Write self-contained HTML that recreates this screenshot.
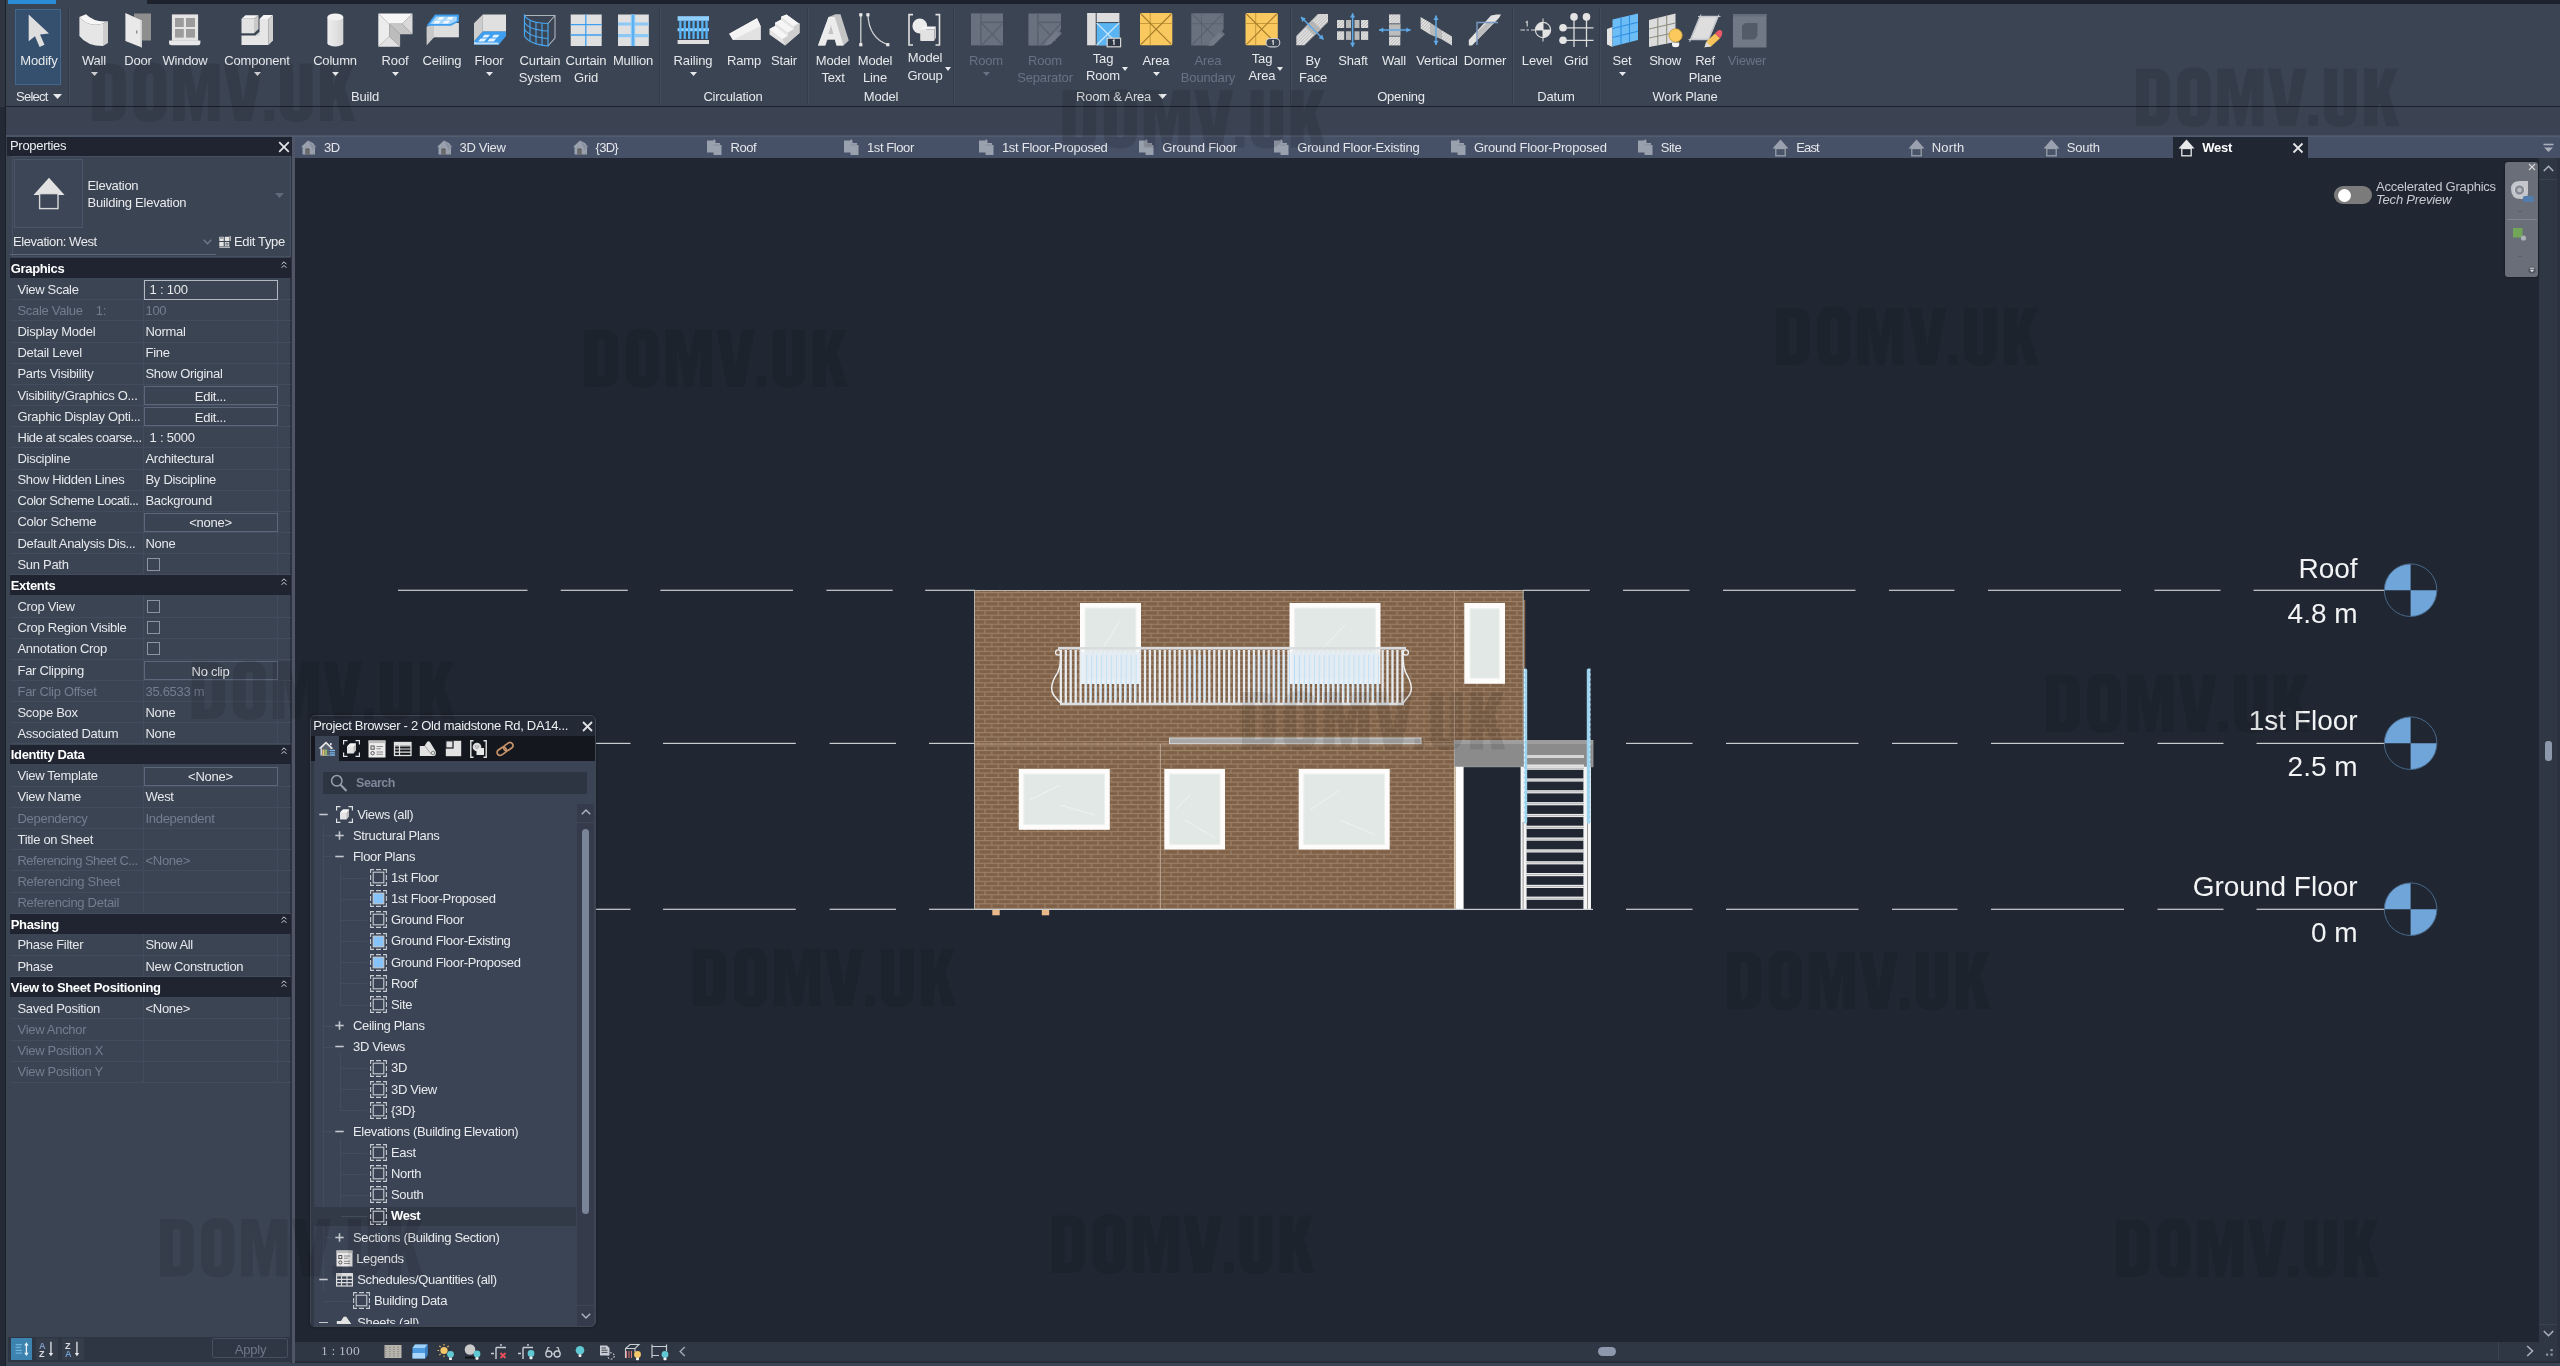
<!DOCTYPE html><html><head><meta charset="utf-8"><title>Revit</title><style>
*{box-sizing:border-box;margin:0;padding:0}
html,body{width:2560px;height:1366px;overflow:hidden;background:#3b4453;}
body{font-family:"Liberation Sans",sans-serif;color:#e9eaec;font-size:13px;position:relative;-webkit-font-smoothing:antialiased}
.a{position:absolute}
.t{position:absolute;white-space:nowrap;line-height:16px;font-size:13px;color:#e9eaec}
.c{transform:translateX(-50%);text-align:center}
.dim{color:#707a8a}
.b{font-weight:bold;color:#fff}
svg{position:absolute;overflow:visible}
</style></head><body><div id="root" style="position:absolute;left:0;top:0;width:2560px;height:1366px;overflow:hidden;will-change:transform">
<div class="a" style="left:0px;top:0px;width:2560px;height:1366px;background:#3b4453;"></div>
<div class="a" style="left:147px;top:0px;width:2413px;height:4px;background:#1d222c;"></div>
<div class="a" style="left:8px;top:0px;width:48px;height:4px;background:#2a8bd6;"></div>
<div class="a" style="left:0px;top:0px;width:5px;height:107px;background:#2f3641;"></div>
<div class="a" style="left:5px;top:0px;width:1px;height:1366px;background:#1c2029;"></div>
<div class="a" style="left:0px;top:107px;width:5px;height:1259px;background:#232935;"></div>
<div class="a" style="left:6px;top:106px;width:2554px;height:1px;background:#1c212b;"></div>
<div class="a" style="left:6px;top:107px;width:2554px;height:28px;background:#3b4353;"></div>
<div class="a" style="left:6px;top:135px;width:2554px;height:2px;background:#4b5568;"></div>
<div class="a" style="left:15px;top:9px;width:46px;height:76px;background:#34506e;border:1px solid #41688c"></div>
<div class="a" style="left:68px;top:8px;width:1px;height:96px;background:#343c4a;"></div>
<div class="a" style="left:69px;top:8px;width:1px;height:96px;background:#434c5c;"></div>
<div class="a" style="left:659px;top:8px;width:1px;height:96px;background:#343c4a;"></div>
<div class="a" style="left:660px;top:8px;width:1px;height:96px;background:#434c5c;"></div>
<div class="a" style="left:807px;top:8px;width:1px;height:96px;background:#343c4a;"></div>
<div class="a" style="left:808px;top:8px;width:1px;height:96px;background:#434c5c;"></div>
<div class="a" style="left:953px;top:8px;width:1px;height:96px;background:#343c4a;"></div>
<div class="a" style="left:954px;top:8px;width:1px;height:96px;background:#434c5c;"></div>
<div class="a" style="left:1290px;top:8px;width:1px;height:96px;background:#343c4a;"></div>
<div class="a" style="left:1291px;top:8px;width:1px;height:96px;background:#434c5c;"></div>
<div class="a" style="left:1512px;top:8px;width:1px;height:96px;background:#343c4a;"></div>
<div class="a" style="left:1513px;top:8px;width:1px;height:96px;background:#434c5c;"></div>
<div class="a" style="left:1599px;top:8px;width:1px;height:96px;background:#343c4a;"></div>
<div class="a" style="left:1600px;top:8px;width:1px;height:96px;background:#434c5c;"></div>
<div class="t c" style="left:39px;top:52.5px;color:#e6e8eb;letter-spacing:-0.16px">Modify</div>
<svg style="left:22px;top:12px" width="34" height="36" viewBox="0 0 34 36"><path d="M6.7 2.4 L6.7 29.3 L13 24.3 L17.6 35 L22.5 32.7 L18 22.5 L27 21.5 Z" fill="#dedede"/></svg>
<div class="t c" style="left:94px;top:52.5px;color:#e6e8eb;letter-spacing:-0.15px">Wall</div>
<svg style="left:90.5px;top:71.5px" width="7" height="4" viewBox="0 0 7 4"><path d="M0 0 H7 L3.5 4 Z" fill="#e6e8eb"/></svg>
<svg style="left:77px;top:12px" width="34" height="36" viewBox="0 0 34 36"><path d="M2.4 5 Q12 16 26 11.5 L26 34 Q10 34 2.4 24 Z" fill="#e6e6e6"/><path d="M2.4 5 L9 2.3 Q17 10.5 31 9.3 L26 11.5 Q12 16 2.4 5 Z" fill="#f6f6f6"/><path d="M26 11.5 L31 9.3 L31 31 L26 34 Z" fill="#cdcdcd"/></svg>
<div class="t c" style="left:138px;top:52.5px;color:#e6e8eb;letter-spacing:-0.18px">Door</div>
<svg style="left:121px;top:12px" width="34" height="36" viewBox="0 0 34 36"><rect x="13" y="1.5" width="17" height="27" fill="#8e8e8e"/><path d="M4.4 1.1 L20.9 8.6 L20.9 35.5 L4.4 29 Z" fill="#e9e9e9"/><path d="M19.4 8 L20.9 8.6 L20.9 35.5 L19.4 35 Z" fill="#cfcfcf"/><rect x="15" y="18.5" width="1.4" height="3" fill="#8a8a8a"/></svg>
<div class="t c" style="left:185px;top:52.5px;color:#e6e8eb;letter-spacing:-0.19px">Window</div>
<svg style="left:168px;top:12px" width="34" height="36" viewBox="0 0 34 36"><rect x="3.9" y="2.4" width="26.2" height="26.4" fill="#e4e4e4"/><rect x="7" y="6" width="8.8" height="9" fill="#9c9c9c"/><rect x="18" y="6" width="9" height="9" fill="#9c9c9c"/><rect x="7" y="17" width="8.8" height="8.6" fill="#9c9c9c"/><rect x="18" y="17" width="9" height="8.6" fill="#9c9c9c"/><path d="M1 28.6 H32.4 V31 Q32.4 33.3 30 33.3 H3.4 Q1 33.3 1 31 Z" fill="#e8e8e8"/></svg>
<div class="t c" style="left:257px;top:52.5px;color:#e6e8eb;letter-spacing:-0.19px">Component</div>
<svg style="left:253.5px;top:71.5px" width="7" height="4" viewBox="0 0 7 4"><path d="M0 0 H7 L3.5 4 Z" fill="#e6e8eb"/></svg>
<svg style="left:240px;top:12px" width="34" height="36" viewBox="0 0 34 36"><path d="M1.5 6.8 L5.5 3.2 H18.5 L14 6.8 Z" fill="#f4f4f4"/><rect x="1.5" y="6.8" width="12.5" height="14.5" fill="#e2e2e2"/><path d="M14 6.8 L18.5 3.2 V17 L14 21.3 Z" fill="#c9c9c9"/><path d="M1.5 23.5 H15.5 L19.5 20 V7 H28.5 V33 H1.5 Z" fill="#e6e6e6"/><path d="M19.5 7 L23.5 3 H33 L28.5 7 Z" fill="#f5f5f5"/><path d="M28.5 7 L33 3 V28.5 L28.5 33 Z" fill="#d0d0d0"/><path d="M15.5 23.5 L19.5 20 V23.5 Z" fill="#cfcfcf"/></svg>
<div class="t c" style="left:335px;top:52.5px;color:#e6e8eb;letter-spacing:-0.19px">Column</div>
<svg style="left:331.5px;top:71.5px" width="7" height="4" viewBox="0 0 7 4"><path d="M0 0 H7 L3.5 4 Z" fill="#e6e8eb"/></svg>
<svg style="left:318px;top:12px" width="34" height="36" viewBox="0 0 34 36"><defs><linearGradient id="gcol" x1="0" x2="1"><stop offset="0" stop-color="#ededed"/><stop offset=".5" stop-color="#e2e2e2"/><stop offset="1" stop-color="#d4d4d4"/></linearGradient></defs><path d="M9.4 5 V31.5 A8 3.3 0 0 0 25.3 31.5 V5 Z" fill="url(#gcol)"/><ellipse cx="17.35" cy="5" rx="7.95" ry="3.6" fill="#f2f2f2"/></svg>
<div class="t c" style="left:395px;top:52.5px;color:#e6e8eb;letter-spacing:-0.17px">Roof</div>
<svg style="left:391.5px;top:71.5px" width="7" height="4" viewBox="0 0 7 4"><path d="M0 0 H7 L3.5 4 Z" fill="#e6e8eb"/></svg>
<svg style="left:378px;top:12px" width="34" height="36" viewBox="0 0 34 36"><path d="M.3 1.4 H34.5 L24 11.8 H11.2 Z" fill="#f6f6f6"/><path d="M34.5 1.4 V22.2 L24 11.8 Z" fill="#dadada"/><path d="M11.2 11.8 H24 L34.5 22.2 H22.1 Z" fill="#c6c6c6"/><path d="M.3 1.4 L11.2 11.8 V24.5 L.3 34.8 Z" fill="#ececec"/><path d="M11.2 11.8 L22.1 22.2 V34.8 L11.2 24.5 Z" fill="#bcbcbc"/><path d="M.3 34.8 H22.1 L11.2 24.5 Z" fill="#e2e2e2"/></svg>
<div class="t c" style="left:442px;top:52.5px;color:#e6e8eb;letter-spacing:-0.14px">Ceiling</div>
<svg style="left:425px;top:12px" width="34" height="36" viewBox="0 0 34 36"><path d="M1.6 14.8 L9 11.5 V25.3 L1.6 33.5 Z" fill="#c9c9c9"/><rect x="9" y="11" width="24.9" height="14.3" fill="#dedede"/><path d="M10 2.6 H33.9 V9.5 L26 13.8 H1.6 Z" fill="#3f9fee"/><path d="M11 4.4 H31.8 V8.7 L25.3 12 H5.2 Z" fill="#a8d6fb"/><path d="M14.5 5 H19.5 L17.3 7.8 H12.2 Z M23.5 5 H28.5 L26.8 7.8 H21.5 Z M10.5 8.7 H15.8 L13.8 11.4 H8.3 Z M19.5 8.7 H25 L23 11.4 H17.5 Z" fill="#f0f8ff"/></svg>
<div class="t c" style="left:489px;top:52.5px;color:#e6e8eb;letter-spacing:-0.15px">Floor</div>
<svg style="left:485.5px;top:71.5px" width="7" height="4" viewBox="0 0 7 4"><path d="M0 0 H7 L3.5 4 Z" fill="#e6e8eb"/></svg>
<svg style="left:472px;top:12px" width="34" height="36" viewBox="0 0 34 36"><path d="M2 11.2 L10.8 2.5 V19.6 L2 29.5 Z" fill="#cdcdcd"/><rect x="10.8" y="2.5" width="23.2" height="17.1" fill="#e0e0e0"/><path d="M10.8 19.6 H34 V24 L27 32.5 H2 V29.5 Z" fill="#3f9fee"/><path d="M12.5 22.8 H18 L15.8 25.4 H10.3 Z M22 22.8 H27.5 L25.3 25.4 H19.8 Z M8.8 26.4 H14.8 L12.2 29.4 H6 Z M17.8 26.4 H24.2 L21.8 29.4 H15.3 Z" fill="#e4f3ff"/><path d="M2 29.5 L4.5 30.6 H26 L27 32.5 H2 Z" fill="#bfe0fb"/></svg>
<div class="t c" style="left:540px;top:52.5px;color:#e6e8eb;letter-spacing:-0.15px">Curtain</div>
<div class="t c" style="left:540px;top:70.0px;color:#e6e8eb;letter-spacing:-0.18px">System</div>
<svg style="left:523px;top:12px" width="34" height="36" viewBox="0 0 34 36"><path d="M1.5 3.5 L32 3.5 L32 26 L25 34 M32 3.5 L25 11.5" stroke="#aeb4bc" stroke-width="1.1" fill="none"/><path d="M1.5 3.5 Q6 11 25 11.5 V34 Q6 32 1.5 24 Z" fill="none" stroke="#4aa8f0" stroke-width="1.2"/><path d="M1.5 10.5 Q6 18 25 19 M1.5 17.3 Q6 25 25 26.5 M7 8.3 V29.4 M13 10.3 V32 M19 11.2 V33.3" stroke="#4aa8f0" stroke-width="1.1" fill="none"/></svg>
<div class="t c" style="left:586px;top:52.5px;color:#e6e8eb;letter-spacing:-0.15px">Curtain</div>
<div class="t c" style="left:586px;top:70.0px;color:#e6e8eb;letter-spacing:-0.15px">Grid</div>
<svg style="left:569px;top:12px" width="34" height="36" viewBox="0 0 34 36"><rect x="1.7" y="2.5" width="31" height="31.5" fill="#e0e0e0"/><path d="M16.8 2.5 V34 M1.7 12.6 H32.7 M1.7 23 H32.7" stroke="#3f9fee" stroke-width="1.3"/></svg>
<div class="t c" style="left:633px;top:52.5px;color:#e6e8eb;letter-spacing:-0.15px">Mullion</div>
<svg style="left:616px;top:12px" width="34" height="36" viewBox="0 0 34 36"><rect x="2" y="2.5" width="30.8" height="31.5" fill="#e0e0e0"/><path d="M2 12 H32.8 M2 23.6 H32.8" stroke="#8cc8f5" stroke-width="3.2"/><path d="M17 2.5 V34" stroke="#8cc8f5" stroke-width="4.4"/><path d="M17 2.5 V34" stroke="#3f9fee" stroke-width="1.2"/></svg>
<div class="t c" style="left:693px;top:52.5px;color:#e6e8eb;letter-spacing:-0.14px">Railing</div>
<svg style="left:689.5px;top:71.5px" width="7" height="4" viewBox="0 0 7 4"><path d="M0 0 H7 L3.5 4 Z" fill="#e6e8eb"/></svg>
<svg style="left:676px;top:12px" width="34" height="36" viewBox="0 0 34 36"><rect x="1.6" y="4.2" width="31.4" height="4.6" fill="#8fd0ff"/><rect x="1.6" y="16.2" width="31.4" height="3" fill="#8fd0ff"/><rect x="3.2" y="8.8" width="2.3" height="18.2" fill="#56b4f5"/><rect x="7.6" y="8.8" width="2.3" height="18.2" fill="#56b4f5"/><rect x="12" y="8.8" width="2.3" height="18.2" fill="#56b4f5"/><rect x="16.4" y="8.8" width="2.3" height="18.2" fill="#56b4f5"/><rect x="20.8" y="8.8" width="2.3" height="18.2" fill="#56b4f5"/><rect x="25.2" y="8.8" width="2.3" height="18.2" fill="#56b4f5"/><rect x="29.4" y="8.8" width="2.3" height="18.2" fill="#56b4f5"/><rect x="1.6" y="28" width="31.4" height="4" fill="#e0e0e0"/></svg>
<div class="t c" style="left:744px;top:52.5px;color:#e6e8eb;letter-spacing:-0.22px">Ramp</div>
<svg style="left:727px;top:12px" width="34" height="36" viewBox="0 0 34 36"><path d="M2.2 21.8 L30 6.3 L33.6 14 V28 H6 Z" fill="#e6e6e6"/><path d="M2.2 21.8 L30 6.3 L33.6 14 L6 28 Z" fill="#f3f3f3"/><path d="M6 28 L33.6 14 V28 Z" fill="#e2e2e2"/></svg>
<div class="t c" style="left:784px;top:52.5px;color:#e6e8eb;letter-spacing:-0.13px">Stair</div>
<svg style="left:767px;top:12px" width="34" height="36" viewBox="0 0 34 36"><path d="M2.5 17 L8 14 L8 10.8 L14 7.6 V4.8 L19.5 2.6 L32.5 12 V21 L18 33.5 L2.5 22.5 Z" fill="#e4e4e4"/><path d="M14 4.8 L19.5 2.6 L32.5 12 L27 14.6 Z M8 10.8 L14 7.8 L27 17.5 L21 20.8 Z M2.5 17 L8 14 L21 24 L15.5 27.2 Z" fill="#f6f6f6"/><path d="M15.5 27 L21 23.8 V20.5 L27 17 V14 L32.5 11 V21 L18 33.5 Z" fill="#cfcfcf"/></svg>
<div class="t c" style="left:833px;top:52.5px;color:#e6e8eb;letter-spacing:-0.18px">Model</div>
<div class="t c" style="left:833px;top:70.0px;color:#e6e8eb;letter-spacing:-0.15px">Text</div>
<svg style="left:816px;top:12px" width="34" height="36" viewBox="0 0 34 36"><path d="M12.5 5 L19.5 2.2 L24.5 2.2 L32.8 28.5 L27.5 33.5 L20.5 33.5 L19 27.5 H11.5 L9.5 33.5 H2 Z" fill="#c4c4c4"/><path d="M12.5 5 H18.8 L27.5 33.5 H20.5 L18.8 27.5 H11 L9 33.5 H2 Z M12.4 22 H17.4 L15 13 Z" fill="#ececec" fill-rule="evenodd"/></svg>
<div class="t c" style="left:875px;top:52.5px;color:#e6e8eb;letter-spacing:-0.18px">Model</div>
<div class="t c" style="left:875px;top:70.0px;color:#e6e8eb;letter-spacing:-0.15px">Line</div>
<svg style="left:858px;top:12px" width="34" height="36" viewBox="0 0 34 36"><path d="M2.8 2.8 V32.7 M9.9 2.8 Q11 26 29.8 32.7" stroke="#cfcfcf" stroke-width="1.3" fill="none"/><rect x="1.2" y="1.2" width="3.2" height="3.2" fill="#e8e8e8"/><rect x="1.2" y="31.1" width="3.2" height="3.2" fill="#e8e8e8"/><rect x="8.3" y="1.2" width="3.2" height="3.2" fill="#e8e8e8"/><rect x="28.2" y="31.1" width="3.2" height="3.2" fill="#e8e8e8"/></svg>
<div class="t c" style="left:925px;top:49.7px;color:#e6e8eb;letter-spacing:-0.18px">Model</div>
<div class="t c" style="left:925px;top:67.8px;color:#e6e8eb;letter-spacing:-0.18px">Group</div>
<svg style="left:945px;top:67px" width="6" height="4" viewBox="0 0 6 4"><path d="M0 0 H6 L3 4 Z" fill="#e6e8eb"/></svg>
<svg style="left:908px;top:12px" width="34" height="36" viewBox="0 0 34 36"><path d="M5 2.6 H1 V33 H5 M27.5 2.6 H31.5 V33 H27.5" stroke="#e0e0e0" stroke-width="1.6" fill="none"/><circle cx="11.8" cy="14" r="7.4" fill="#ececec"/><path d="M12.2 17.5 L15.5 14.5 H28 L26.3 17.5 Z" fill="#f4f4f4"/><rect x="12.2" y="17.5" width="14.1" height="11.5" rx="1" fill="#e2e2e2"/><path d="M26.3 17.5 L28 14.5 V25.5 L26.3 29 Z" fill="#c8c8c8"/></svg>
<div class="t c" style="left:986px;top:52.5px;color:#687283;letter-spacing:-0.22px">Room</div>
<svg style="left:982.5px;top:71.5px" width="7" height="4" viewBox="0 0 7 4"><path d="M0 0 H7 L3.5 4 Z" fill="#687283"/></svg>
<svg style="left:969px;top:12px" width="34" height="36" viewBox="0 0 34 36"><rect x="2" y="1.4" width="32" height="32" fill="#6a717e"/><rect x="11" y="1.4" width="1.6" height="32" fill="#596070"/><rect x="11" y="9.5" width="23" height="1.6" fill="#596070"/><path d="M13 11.5 L33.5 33 M33.5 11.5 L13 33" stroke="#596070" stroke-width="1.2"/></svg>
<div class="t c" style="left:1045px;top:52.5px;color:#687283;letter-spacing:-0.22px">Room</div>
<div class="t c" style="left:1045px;top:70.0px;color:#687283;letter-spacing:-0.16px">Separator</div>
<svg style="left:1028px;top:12px" width="34" height="36" viewBox="0 0 34 36"><path d="M.4 1.4 H33 V17 L20 33.4 H.4 Z" fill="#6a717e"/><rect x="9" y="1.4" width="1.6" height="32" fill="#596070"/><rect x="9" y="9.5" width="24" height="1.6" fill="#596070"/><path d="M11 11.5 L28 29 M33 11.5 L13 33" stroke="#596070" stroke-width="1.2"/><path d="M17.5 33 L19 28.5 L30 17.5 L33.8 21.3 L22.5 32.5 Z" fill="#737a87"/><path d="M29 18.5 L32.8 22.3" stroke="#596070" stroke-width="1"/></svg>
<div class="t c" style="left:1103px;top:51.0px;color:#e6e8eb;letter-spacing:-0.17px">Tag</div>
<div class="t c" style="left:1103px;top:67.9px;color:#e6e8eb;letter-spacing:-0.22px">Room</div>
<svg style="left:1122px;top:67px" width="6" height="4" viewBox="0 0 6 4"><path d="M0 0 H6 L3 4 Z" fill="#e6e8eb"/></svg>
<svg style="left:1086px;top:12px" width="34" height="36" viewBox="0 0 34 36"><rect x="1.1" y="1" width="32.3" height="32.3" fill="#dddddd"/><rect x="10.2" y="10.6" width="23.2" height="22.7" fill="#5ab4f2"/><path d="M10.2 1 V33.3 M10.2 10.6 H33.4" stroke="#3b4453" stroke-width="1"/><path d="M10.7 11 L33 33 M33 11 L10.7 33" stroke="#c7e6fb" stroke-width="1.2"/><rect x="21.2" y="26.2" width="13.4" height="8.6" fill="#2e3644" stroke="#d6d6d6" stroke-width="1.2"/><path d="M26.8 28.8 L28 28 V33" stroke="#e8e8e8" stroke-width="1.2" fill="none"/></svg>
<div class="t c" style="left:1156px;top:52.5px;color:#e6e8eb;letter-spacing:-0.17px">Area</div>
<svg style="left:1152.5px;top:71.5px" width="7" height="4" viewBox="0 0 7 4"><path d="M0 0 H7 L3.5 4 Z" fill="#e6e8eb"/></svg>
<svg style="left:1139px;top:12px" width="34" height="36" viewBox="0 0 34 36"><rect x="1" y="1" width="32.3" height="32.3" rx="1.5" fill="#f9c95f"/><path d="M11.2 1 V33.3 M1 11.5 H33.3" stroke="#c79a3c" stroke-width="1"/><path d="M2 2 L32.3 32.3 M32.3 2 L2 32.3" stroke="#a57c2b" stroke-width="1.1"/></svg>
<div class="t c" style="left:1208px;top:52.5px;color:#687283;letter-spacing:-0.17px">Area</div>
<div class="t c" style="left:1208px;top:70.0px;color:#687283;letter-spacing:-0.17px">Boundary</div>
<svg style="left:1191px;top:12px" width="34" height="36" viewBox="0 0 34 36"><path d="M.3 1.2 H32.6 V17 L20 33.5 H.3 Z" fill="#6a717e"/><path d="M10.5 1.2 V33.5 M.3 11.7 H32.6" stroke="#5c6371" stroke-width="1"/><path d="M1.3 2.2 L27 28 M31.6 2.2 L1.3 32.5" stroke="#596070" stroke-width="1.1"/><path d="M17.5 34 L19 29.5 L30 18.5 L33.8 22.3 L22.5 33.5 Z" fill="#737a87"/><path d="M29 19.5 L32.8 23.3" stroke="#596070" stroke-width="1"/></svg>
<div class="t c" style="left:1262px;top:51.0px;color:#e6e8eb;letter-spacing:-0.17px">Tag</div>
<div class="t c" style="left:1262px;top:67.9px;color:#e6e8eb;letter-spacing:-0.17px">Area</div>
<svg style="left:1277px;top:67px" width="6" height="4" viewBox="0 0 6 4"><path d="M0 0 H6 L3 4 Z" fill="#e6e8eb"/></svg>
<svg style="left:1245px;top:12px" width="34" height="36" viewBox="0 0 34 36"><rect x="0.5" y="1" width="32.3" height="32.3" rx="1.5" fill="#f9c95f"/><path d="M10.7 1 V33.3 M0.5 11.5 H32.8" stroke="#c79a3c" stroke-width="1"/><path d="M1.5 2 L31.8 32.3 M31.8 2 L1.5 32.3" stroke="#a57c2b" stroke-width="1.1"/><rect x="21" y="26.5" width="13.8" height="8.4" rx="4.2" fill="#3a4352" stroke="#c9ccd2" stroke-width="1.1"/><path d="M27 29.3 L28.2 28.6 V33" stroke="#e8e8e8" stroke-width="1.1" fill="none"/></svg>
<div class="t c" style="left:1313px;top:52.5px;color:#e6e8eb;letter-spacing:-0.19px">By</div>
<div class="t c" style="left:1313px;top:70.0px;color:#e6e8eb;letter-spacing:-0.18px">Face</div>
<svg style="left:1296px;top:12px" width="34" height="36" viewBox="0 0 34 36"><defs><pattern id="hA" width="2.2" height="2.2" patternUnits="userSpaceOnUse" patternTransform="rotate(-45)"><rect width="2.2" height="2.2" fill="#e2e2e2"/><rect width="2.2" height="0.8" fill="#b9b9b9"/></pattern><pattern id="hB" width="2.2" height="2.2" patternUnits="userSpaceOnUse" patternTransform="rotate(-45)"><rect width="2.2" height="2.2" fill="#c4c4c4"/><rect width="2.2" height="0.8" fill="#a9a9a9"/></pattern></defs><path d="M.3 24 L22 2 H32 V10 L8.5 33.3 H.3 Z" fill="url(#hA)"/><path d="M9.5 15 L16 8.3 L25 17 L18.3 23.6 Z" fill="#b5b5b5"/><path d="M5 5 L27.5 27.5" stroke="#5fa8e6" stroke-width="1.5"/><path d="M5.0 5.0 L6.2 9.9 L9.9 6.2 Z M27.5 27.5 L22.6 26.3 L26.3 22.6 Z" fill="#5fa8e6"/></svg>
<div class="t c" style="left:1353px;top:52.5px;color:#e6e8eb;letter-spacing:-0.15px">Shaft</div>
<svg style="left:1336px;top:12px" width="34" height="36" viewBox="0 0 34 36"><rect x="1" y="8" width="7.2" height="8" fill="url(#hA)"/><rect x="10" y="8" width="5" height="8" fill="#b9b9b9"/><rect x="18.5" y="8" width="5" height="8" fill="#b9b9b9"/><rect x="25" y="8" width="7.2" height="8" fill="url(#hA)"/><rect x="1" y="19.3" width="7.2" height="8.6" fill="url(#hA)"/><rect x="10" y="19.3" width="5" height="8.6" fill="#b9b9b9"/><rect x="18.5" y="19.3" width="5" height="8.6" fill="#b9b9b9"/><rect x="25" y="19.3" width="7.2" height="8.6" fill="url(#hA)"/><path d="M16.6 1.2 L16.6 35" stroke="#5fa8e6" stroke-width="1.5"/><path d="M16.6 1.2 L14.0 5.5 L19.2 5.5 Z M16.6 35.0 L14.0 30.7 L19.2 30.7 Z" fill="#5fa8e6"/></svg>
<div class="t c" style="left:1394px;top:52.5px;color:#e6e8eb;letter-spacing:-0.15px">Wall</div>
<svg style="left:1377px;top:12px" width="34" height="36" viewBox="0 0 34 36"><rect x="12" y="2.4" width="11.3" height="31" fill="url(#hA)"/><rect x="12" y="11.8" width="11.3" height="12.4" fill="#bdbdbd"/><path d="M12 11.8 H23.3 M12 24.2 H23.3" stroke="#3b4453" stroke-width=".8"/><path d="M2 18 L33.6 18" stroke="#5fa8e6" stroke-width="1.5"/><path d="M2.0 18.0 L6.3 20.6 L6.3 15.4 Z M33.6 18.0 L29.3 20.6 L29.3 15.4 Z" fill="#5fa8e6"/></svg>
<div class="t c" style="left:1437px;top:52.5px;color:#e6e8eb;letter-spacing:-0.13px">Vertical</div>
<svg style="left:1420px;top:12px" width="34" height="36" viewBox="0 0 34 36"><path d="M.6 4.9 L10 10.5 V22.5 L.6 16.5 Z M22 18.5 L32 24.5 V33.5 L22 27.5 Z" fill="url(#hA)"/><path d="M10 10.5 L22 18.5 V27.5 L10 22.5 Z" fill="#b9b9b9"/><path d="M16 3.6 L16 33" stroke="#5fa8e6" stroke-width="1.5"/><path d="M16.0 3.6 L13.4 7.9 L18.6 7.9 Z M16.0 33.0 L13.4 28.7 L18.6 28.7 Z" fill="#5fa8e6"/></svg>
<div class="t c" style="left:1485px;top:52.5px;color:#e6e8eb;letter-spacing:-0.18px">Dormer</div>
<svg style="left:1468px;top:12px" width="34" height="36" viewBox="0 0 34 36"><path d="M.8 28 L23 3.5 L28.5 2.4 H33 L31 6 L4 33.6 H.8 Z" fill="#e2e2e2"/><path d="M9.5 19.5 L19 10.5 H25.5 L9.5 27.5 Z" fill="#bdbdbd"/><path d="M9 33 V10.5 H30" stroke="#7a9bc4" stroke-width="1.4" fill="none"/></svg>
<div class="t c" style="left:1537px;top:52.5px;color:#e6e8eb;letter-spacing:-0.16px">Level</div>
<svg style="left:1520px;top:12px" width="34" height="36" viewBox="0 0 34 36"><path d="M.5 18 H5 M6.5 18 H9 M11 18 H31" stroke="#d8d8d8" stroke-width="1.1"/><path d="M23 6.5 V29.5" stroke="#d8d8d8" stroke-width="1.1"/><circle cx="23" cy="18" r="7.6" fill="none" stroke="#d8d8d8" stroke-width="1.2"/><path d="M23 18 V10.4 A7.6 7.6 0 0 0 15.4 18 Z M23 18 V25.6 A7.6 7.6 0 0 0 30.6 18 Z" fill="#e4e4e4"/><path d="M5.8 10.5 L7.2 9.5 V14.5" stroke="#d8d8d8" stroke-width="1.1" fill="none"/></svg>
<div class="t c" style="left:1576px;top:52.5px;color:#e6e8eb;letter-spacing:-0.15px">Grid</div>
<svg style="left:1559px;top:12px" width="34" height="36" viewBox="0 0 34 36"><path d="M15 5 V35 M27.5 5 V35 M4 15.8 H34.5 M4 28.3 H34.5" stroke="#dcdcdc" stroke-width="1.3"/><circle cx="15" cy="4.9" r="3.8" fill="#e4e4e4"/><circle cx="27.5" cy="4.9" r="3.8" fill="#e4e4e4"/><circle cx="4" cy="15.8" r="3.8" fill="#e4e4e4"/><circle cx="4" cy="28.3" r="3.8" fill="#e4e4e4"/></svg>
<div class="t c" style="left:1622px;top:52.5px;color:#e6e8eb;letter-spacing:-0.16px">Set</div>
<svg style="left:1618.5px;top:71.5px" width="7" height="4" viewBox="0 0 7 4"><path d="M0 0 H7 L3.5 4 Z" fill="#e6e8eb"/></svg>
<svg style="left:1605px;top:12px" width="34" height="36" viewBox="0 0 34 36"><path d="M2 17 L7.5 15 V35 L2 32.5 Z" fill="#e4e4e4"/><path d="M7.5 7.5 L33 1.5 V28 L7.5 34.5 Z" fill="#6cbcf6"/><path d="M16.0 5.5 V32.3 M7.5 16.5 L33 10.3 M24.5 3.5 V30.2 M7.5 25.5 L33 19.2 " stroke="#2f8fe0" stroke-width="1.1" fill="none"/></svg>
<div class="t c" style="left:1665px;top:52.5px;color:#e6e8eb;letter-spacing:-0.20px">Show</div>
<svg style="left:1648px;top:12px" width="34" height="36" viewBox="0 0 34 36"><path d="M1 8 L27.5 1.5 V30 L1 35 Z" fill="#dcdcdc"/><path d="M9.8 5.8 V33.3 M1 17.0 L27.5 11.0 M18.7 3.7 V31.7 M1 26.0 L27.5 20.5 " stroke="#8e8e80" stroke-width="1.1" fill="none"/><circle cx="27.6" cy="23.3" r="6.6" fill="#fbc95c" stroke="#c99a35" stroke-width=".8"/><path d="M24 30.5 H31.2 V32.8 Q31.2 35.3 27.6 35.3 Q24 35.3 24 32.8 Z" fill="#f2f2f2"/></svg>
<div class="t c" style="left:1705px;top:52.5px;color:#e6e8eb;letter-spacing:-0.17px">Ref</div>
<div class="t c" style="left:1705px;top:70.0px;color:#e6e8eb;letter-spacing:-0.17px">Plane</div>
<svg style="left:1688px;top:12px" width="34" height="36" viewBox="0 0 34 36"><path d="M2.5 27.5 L12 4.5 H30 L20.5 27.5 Z" fill="#dedede" stroke="#b9bdc4" stroke-width="1.4"/><path d="M.5 27.5 H22 M10 4.5 H32.5 M13 2.5 L1.5 30 M31 2.5 L19.5 30" stroke="#c4c8ce" stroke-width="1"/><path d="M16.5 35.3 L18.3 29.8 L27 21.5 L32 26.3 L23 34.5 Z" fill="#f5c45a"/><path d="M16.5 35.3 L18.3 29.8 L23 34.5 Z" fill="#dcdcdc"/><path d="M27 21.5 L29.5 19 Q32.5 17 34 19.5 Q35 22.5 32 26.3 Z" fill="#ec5a6a"/></svg>
<div class="t c" style="left:1747px;top:52.5px;color:#687283;letter-spacing:-0.16px">Viewer</div>
<svg style="left:1730px;top:12px" width="34" height="36" viewBox="0 0 34 36"><rect x="3" y="2" width="33.5" height="33.5" fill="#727986"/><rect x="3" y="2" width="33.5" height="2.5" fill="#666d7a"/><path d="M12 14 L15 11 H27.5 V24 L24.5 27.5 H12 Z" fill="#545b68"/></svg>
<div class="t " style="left:16px;top:89.3px;color:#e6e8eb;letter-spacing:-0.75px">Select</div>
<div class="t c" style="left:365px;top:89.3px;color:#e6e8eb;letter-spacing:-0.2px">Build</div>
<div class="t c" style="left:733px;top:89.3px;color:#e6e8eb;letter-spacing:-0.2px">Circulation</div>
<div class="t c" style="left:881px;top:89.3px;color:#e6e8eb;letter-spacing:-0.2px">Model</div>
<div class="t " style="left:1076px;top:89.3px;color:#e6e8eb;letter-spacing:-0.2px">Room &amp; Area</div>
<div class="t c" style="left:1401px;top:89.3px;color:#e6e8eb;letter-spacing:-0.2px">Opening</div>
<div class="t c" style="left:1556px;top:89.3px;color:#e6e8eb;letter-spacing:-0.2px">Datum</div>
<div class="t c" style="left:1685px;top:89.3px;color:#e6e8eb;letter-spacing:-0.2px">Work Plane</div>
<svg style="left:53px;top:94px" width="9" height="5" viewBox="0 0 9 5"><path d="M0 0 H9 L4.5 5 Z" fill="#e6e8eb"/></svg>
<svg style="left:1158px;top:94px" width="9" height="5" viewBox="0 0 9 5"><path d="M0 0 H9 L4.5 5 Z" fill="#e6e8eb"/></svg>
<div class="a" style="left:292px;top:137px;width:2268px;height:21px;background:#465066;"></div>
<div class="a" style="left:292px;top:136px;width:2268px;height:1px;background:#525c70;"></div>
<svg style="left:300px;top:139px" width="17" height="17" viewBox="0 0 17 17"><path d="M1 8 L8 1.5 L13 4 L16 8 L15 8 L15 15.5 L2.5 15.5 L2.5 8 Z" fill="#9aa1ae"/><path d="M8 1.5 L16 8.5 L13.5 8.5 L13.5 15.5 L15 15.5" fill="#7c8492" opacity=".6"/><rect x="5.5" y="9.5" width="4" height="6" fill="#5b5346"/><rect x="6.5" y="10.5" width="2" height="5" fill="#6d7482"/></svg>
<div class="t " style="left:324px;top:140.0px;color:#e4e6ea;letter-spacing:-0.56px">3D</div>
<svg style="left:436px;top:139px" width="17" height="17" viewBox="0 0 17 17"><path d="M1 8 L8 1.5 L13 4 L16 8 L15 8 L15 15.5 L2.5 15.5 L2.5 8 Z" fill="#9aa1ae"/><path d="M8 1.5 L16 8.5 L13.5 8.5 L13.5 15.5 L15 15.5" fill="#7c8492" opacity=".6"/><rect x="5.5" y="9.5" width="4" height="6" fill="#5b5346"/><rect x="6.5" y="10.5" width="2" height="5" fill="#6d7482"/></svg>
<div class="t " style="left:459.5px;top:140.0px;color:#e4e6ea;letter-spacing:-0.31px">3D View</div>
<svg style="left:572px;top:139px" width="17" height="17" viewBox="0 0 17 17"><path d="M1 8 L8 1.5 L13 4 L16 8 L15 8 L15 15.5 L2.5 15.5 L2.5 8 Z" fill="#9aa1ae"/><path d="M8 1.5 L16 8.5 L13.5 8.5 L13.5 15.5 L15 15.5" fill="#7c8492" opacity=".6"/><rect x="5.5" y="9.5" width="4" height="6" fill="#5b5346"/><rect x="6.5" y="10.5" width="2" height="5" fill="#6d7482"/></svg>
<div class="t " style="left:595.5px;top:140.0px;color:#e4e6ea;letter-spacing:-0.70px">{3D}</div>
<svg style="left:706px;top:139px" width="17" height="17" viewBox="0 0 17 17"><path d="M1 1.5 H7.5 V0.5 H9 V1.5 H9.5 V4 H14 V6 H15.5 V16 H7.5 V13.5 H1 Z" fill="#9aa1ae"/><path d="M7.5 6 H14" stroke="#858c99" stroke-width="1"/></svg>
<div class="t " style="left:730.5px;top:140.0px;color:#e4e6ea;letter-spacing:-0.41px">Roof</div>
<svg style="left:843px;top:139px" width="17" height="17" viewBox="0 0 17 17"><path d="M1 1.5 H7.5 V0.5 H9 V1.5 H9.5 V4 H14 V6 H15.5 V16 H7.5 V13.5 H1 Z" fill="#9aa1ae"/><path d="M7.5 6 H14" stroke="#858c99" stroke-width="1"/></svg>
<div class="t " style="left:867px;top:140.0px;color:#e4e6ea;letter-spacing:-0.42px">1st Floor</div>
<svg style="left:978px;top:139px" width="17" height="17" viewBox="0 0 17 17"><path d="M1 1.5 H7.5 V0.5 H9 V1.5 H9.5 V4 H14 V6 H15.5 V16 H7.5 V13.5 H1 Z" fill="#9aa1ae"/><path d="M7.5 6 H14" stroke="#858c99" stroke-width="1"/></svg>
<div class="t " style="left:1001.9px;top:140.0px;color:#e4e6ea;letter-spacing:-0.27px">1st Floor-Proposed</div>
<svg style="left:1138px;top:139px" width="17" height="17" viewBox="0 0 17 17"><path d="M1 1.5 H7.5 V0.5 H9 V1.5 H9.5 V4 H14 V6 H15.5 V16 H7.5 V13.5 H1 Z" fill="#9aa1ae"/><path d="M7.5 6 H14" stroke="#858c99" stroke-width="1"/></svg>
<div class="t " style="left:1162.3px;top:140.0px;color:#e4e6ea;letter-spacing:-0.16px">Ground Floor</div>
<svg style="left:1273px;top:139px" width="17" height="17" viewBox="0 0 17 17"><path d="M1 1.5 H7.5 V0.5 H9 V1.5 H9.5 V4 H14 V6 H15.5 V16 H7.5 V13.5 H1 Z" fill="#9aa1ae"/><path d="M7.5 6 H14" stroke="#858c99" stroke-width="1"/></svg>
<div class="t " style="left:1297.3px;top:140.0px;color:#e4e6ea;letter-spacing:-0.20px">Ground Floor-Existing</div>
<svg style="left:1450px;top:139px" width="17" height="17" viewBox="0 0 17 17"><path d="M1 1.5 H7.5 V0.5 H9 V1.5 H9.5 V4 H14 V6 H15.5 V16 H7.5 V13.5 H1 Z" fill="#9aa1ae"/><path d="M7.5 6 H14" stroke="#858c99" stroke-width="1"/></svg>
<div class="t " style="left:1473.9px;top:140.0px;color:#e4e6ea;letter-spacing:-0.18px">Ground Floor-Proposed</div>
<svg style="left:1637px;top:139px" width="17" height="17" viewBox="0 0 17 17"><path d="M1 1.5 H7.5 V0.5 H9 V1.5 H9.5 V4 H14 V6 H15.5 V16 H7.5 V13.5 H1 Z" fill="#9aa1ae"/><path d="M7.5 6 H14" stroke="#858c99" stroke-width="1"/></svg>
<div class="t " style="left:1660.7px;top:140.0px;color:#e4e6ea;letter-spacing:-0.45px">Site</div>
<svg style="left:1771.5px;top:138.5px" width="17" height="18" viewBox="0 0 17 18"><path d="M8.5 0.5 L16.5 9.5 H0.5 Z" fill="#9aa1ae"/><rect x="3.8" y="9.5" width="9.4" height="7.3" fill="#4a5468" stroke="#9aa1ae" stroke-width="1.3"/></svg>
<div class="t " style="left:1796.2px;top:140.0px;color:#e4e6ea;letter-spacing:-0.85px">East</div>
<svg style="left:1907.5px;top:138.5px" width="17" height="18" viewBox="0 0 17 18"><path d="M8.5 0.5 L16.5 9.5 H0.5 Z" fill="#9aa1ae"/><rect x="3.8" y="9.5" width="9.4" height="7.3" fill="#4a5468" stroke="#9aa1ae" stroke-width="1.3"/></svg>
<div class="t " style="left:1931.8px;top:140.0px;color:#e4e6ea;letter-spacing:0.18px">North</div>
<svg style="left:2042.5px;top:138.5px" width="17" height="18" viewBox="0 0 17 18"><path d="M8.5 0.5 L16.5 9.5 H0.5 Z" fill="#9aa1ae"/><rect x="3.8" y="9.5" width="9.4" height="7.3" fill="#4a5468" stroke="#9aa1ae" stroke-width="1.3"/></svg>
<div class="t " style="left:2066.7px;top:140.0px;color:#e4e6ea;letter-spacing:-0.15px">South</div>
<div class="a" style="left:2173px;top:137px;width:135px;height:21px;background:#202732;"></div>
<svg style="left:2177.5px;top:138.5px" width="17" height="18" viewBox="0 0 17 18"><path d="M8.5 0.5 L16.5 9.5 H0.5 Z" fill="#e8e8ea"/><rect x="3.8" y="9.5" width="9.4" height="7.3" fill="#202732" stroke="#e8e8ea" stroke-width="1.3"/></svg>
<div class="t b" style="left:2202.2px;top:140.0px;;letter-spacing:-0.21px">West</div>
<svg style="left:2292px;top:142px" width="12" height="12" viewBox="0 0 12 12"><path d="M1.5 1.5 L10.5 10.5 M10.5 1.5 L1.5 10.5" stroke="#e6e6e8" stroke-width="1.8"/></svg>
<svg style="left:2543px;top:143px" width="11" height="10" viewBox="0 0 11 10"><path d="M0.5 1.5 H10.5" stroke="#aab0bc" stroke-width="1.6"/><path d="M1 4.5 H10 L5.5 9 Z" fill="#aab0bc"/></svg>
<div class="a" style="left:295px;top:158px;width:2243.5px;height:1183.5px;background:#202732;"></div>
<svg style="left:0;top:0" width="2560" height="1366" viewBox="0 0 2560 1366"><defs><pattern id="brick" x="971.7" y="587.65" width="13.3" height="9.02" patternUnits="userSpaceOnUse"><rect width="13.3" height="9.02" fill="#7f6148"/><rect x="0" y="0" width="13.3" height="1" fill="#9f856c"/><rect x="0" y="4.51" width="13.3" height="1" fill="#9f856c"/><rect x="6.05" y="1.15" width="1.2" height="3.36" fill="#9a8068"/><rect x="-0.6" y="5.66" width="1.2" height="3.36" fill="#9a8068"/><rect x="12.7" y="5.66" width="1.2" height="3.36" fill="#9a8068"/></pattern></defs><rect x="398" y="589.6999999999999" width="129.5" height="1.2" fill="#c9ccd1"/><rect x="560.7" y="589.6999999999999" width="67.09999999999991" height="1.2" fill="#c9ccd1"/><rect x="660.3" y="589.6999999999999" width="132.70000000000005" height="1.2" fill="#c9ccd1"/><rect x="826.4" y="589.6999999999999" width="66.30000000000007" height="1.2" fill="#c9ccd1"/><rect x="925.2" y="589.6999999999999" width="49.799999999999955" height="1.2" fill="#c9ccd1"/><rect x="1523" y="589.6999999999999" width="66.79999999999995" height="1.2" fill="#c9ccd1"/><rect x="1623" y="589.6999999999999" width="66.5" height="1.2" fill="#c9ccd1"/><rect x="1723" y="589.6999999999999" width="132.5" height="1.2" fill="#c9ccd1"/><rect x="1889" y="589.6999999999999" width="65.5" height="1.2" fill="#c9ccd1"/><rect x="1988" y="589.6999999999999" width="133" height="1.2" fill="#c9ccd1"/><rect x="2154.5" y="589.6999999999999" width="66.0" height="1.2" fill="#c9ccd1"/><rect x="2253.5" y="589.6999999999999" width="131.5" height="1.2" fill="#c9ccd1"/><rect x="595" y="742.8" width="35.5" height="1.2" fill="#c9ccd1"/><rect x="663" y="742.8" width="132.79999999999995" height="1.2" fill="#c9ccd1"/><rect x="829.6" y="742.8" width="66.39999999999998" height="1.2" fill="#c9ccd1"/><rect x="929" y="742.8" width="46" height="1.2" fill="#c9ccd1"/><rect x="1626" y="742.8" width="66.5" height="1.2" fill="#c9ccd1"/><rect x="1726" y="742.8" width="132.5" height="1.2" fill="#c9ccd1"/><rect x="1892" y="742.8" width="65.5" height="1.2" fill="#c9ccd1"/><rect x="1991" y="742.8" width="133" height="1.2" fill="#c9ccd1"/><rect x="2157.5" y="742.8" width="66.0" height="1.2" fill="#c9ccd1"/><rect x="2256.5" y="742.8" width="128.5" height="1.2" fill="#c9ccd1"/><rect x="595" y="908.6999999999999" width="35.5" height="1.2" fill="#c9ccd1"/><rect x="663" y="908.6999999999999" width="132.79999999999995" height="1.2" fill="#c9ccd1"/><rect x="829.6" y="908.6999999999999" width="66.39999999999998" height="1.2" fill="#c9ccd1"/><rect x="929" y="908.6999999999999" width="46" height="1.2" fill="#c9ccd1"/><rect x="1626" y="908.6999999999999" width="66.5" height="1.2" fill="#c9ccd1"/><rect x="1726" y="908.6999999999999" width="132.5" height="1.2" fill="#c9ccd1"/><rect x="1892" y="908.6999999999999" width="65.5" height="1.2" fill="#c9ccd1"/><rect x="1991" y="908.6999999999999" width="133" height="1.2" fill="#c9ccd1"/><rect x="2157.5" y="908.6999999999999" width="66.0" height="1.2" fill="#c9ccd1"/><rect x="2256.5" y="908.6999999999999" width="128.5" height="1.2" fill="#c9ccd1"/><rect x="974.5" y="590.5" width="548.7" height="319" fill="url(#brick)"/><rect x="1523.2" y="600" width="2" height="68" fill="#8a6b50"/><rect x="1454.5" y="766.5" width="70" height="143" fill="#202732"/><path d="M974.5 909.5 V590.5 H1523.2 V741" stroke="#b9b4ae" stroke-width="1" fill="none"/><path d="M1454.3 590.5 V909.5" stroke="#b49a84" stroke-width="1" fill="none"/><path d="M974.5 744 H1454" stroke="#b8a08a" stroke-width="1" fill="none"/><path d="M1160.3 744 V909.5" stroke="#c2ad99" stroke-width="1" fill="none"/><rect x="1169.5" y="738" width="251.5" height="5.6" fill="#a9a9a9" stroke="#d4d4d4" stroke-width="1"/><rect x="1080" y="603" width="61" height="81" fill="#fdfcfa"/><rect x="1084.8" y="607.8" width="51.4" height="71.4" fill="#e1e8e5"/><rect x="1085.2" y="608.1999999999999" width="50.6" height="70.60000000000001" fill="none" stroke="#eef2f0" stroke-width=".8"/><rect x="1289.5" y="603" width="91.0" height="81" fill="#fdfcfa"/><rect x="1294.3" y="607.8" width="81.4" height="71.4" fill="#e1e8e5"/><rect x="1294.7" y="608.1999999999999" width="80.60000000000001" height="70.60000000000001" fill="none" stroke="#eef2f0" stroke-width=".8"/><rect x="1464.3" y="603" width="40.700000000000045" height="80.79999999999995" fill="#fdfcfa"/><rect x="1469.8" y="608.5" width="29.700000000000045" height="69.79999999999995" fill="#e1e8e5"/><rect x="1470.2" y="608.9" width="28.900000000000045" height="68.99999999999996" fill="none" stroke="#eef2f0" stroke-width=".8"/><rect x="1018.8" y="769" width="91.0" height="60.799999999999955" fill="#fdfcfa"/><rect x="1023.5999999999999" y="773.8" width="81.4" height="51.19999999999995" fill="#e1e8e5"/><rect x="1023.9999999999999" y="774.1999999999999" width="80.60000000000001" height="50.399999999999956" fill="none" stroke="#eef2f0" stroke-width=".8"/><rect x="1164.3" y="769" width="60.700000000000045" height="80.5" fill="#fdfcfa"/><rect x="1169.1" y="773.8" width="51.100000000000044" height="70.9" fill="#e1e8e5"/><rect x="1169.5" y="774.1999999999999" width="50.30000000000005" height="70.10000000000001" fill="none" stroke="#eef2f0" stroke-width=".8"/><rect x="1298.7" y="769" width="91.0" height="80.5" fill="#fdfcfa"/><rect x="1303.5" y="773.8" width="81.4" height="70.9" fill="#e1e8e5"/><rect x="1303.9" y="774.1999999999999" width="80.60000000000001" height="70.10000000000001" fill="none" stroke="#eef2f0" stroke-width=".8"/><path d="M1090 670 L1120 620 M1300 672 L1345 625 M1030 800 L1060 785 M1060 805 L1095 815 M1175 810 L1190 795 M1185 820 L1215 838 M1310 810 L1340 790 M1340 820 L1375 835" stroke="#f2f6f4" stroke-width=".8" fill="none"/><rect x="1454.6" y="740.5" width="138.4" height="26.3" fill="#8b8b8b"/><rect x="1454.6" y="740.5" width="138.4" height="3.5" fill="#9e9e9e"/><rect x="1454.6" y="740.5" width="138.4" height="26.3" fill="none" stroke="#a4a4a4" stroke-width=".8"/><rect x="1455.8" y="766.8" width="7.8" height="142.5" fill="#fdfdfd"/><rect x="1454.2" y="766.8" width="1.6" height="142.5" fill="#e8d3b8"/><rect x="1520.6" y="766.8" width="6" height="142.5" fill="#f4f4f4"/><rect x="1583.4" y="766.8" width="7.6" height="142.5" fill="#f4f4f4"/><rect x="1522.6" y="822" width="1" height="87" fill="#9a9a9a"/><rect x="1587" y="822" width="1" height="87" fill="#9a9a9a"/><rect x="1526" y="766.6" width="58" height="3.2" fill="#e9e9e9"/><rect x="1526" y="767.9" width="58" height=".7" fill="#a8a8a8"/><rect x="1526" y="778.4" width="58" height="3.2" fill="#e9e9e9"/><rect x="1526" y="779.7" width="58" height=".7" fill="#a8a8a8"/><rect x="1526" y="790.2" width="58" height="3.2" fill="#e9e9e9"/><rect x="1526" y="791.5" width="58" height=".7" fill="#a8a8a8"/><rect x="1526" y="802.1" width="58" height="3.2" fill="#e9e9e9"/><rect x="1526" y="803.4" width="58" height=".7" fill="#a8a8a8"/><rect x="1526" y="813.9" width="58" height="3.2" fill="#e9e9e9"/><rect x="1526" y="815.2" width="58" height=".7" fill="#a8a8a8"/><rect x="1526" y="825.7" width="58" height="3.2" fill="#e9e9e9"/><rect x="1526" y="827.0" width="58" height=".7" fill="#a8a8a8"/><rect x="1526" y="837.5" width="58" height="3.2" fill="#e9e9e9"/><rect x="1526" y="838.8" width="58" height=".7" fill="#a8a8a8"/><rect x="1526" y="849.3" width="58" height="3.2" fill="#e9e9e9"/><rect x="1526" y="850.6" width="58" height=".7" fill="#a8a8a8"/><rect x="1526" y="861.2" width="58" height="3.2" fill="#e9e9e9"/><rect x="1526" y="862.5" width="58" height=".7" fill="#a8a8a8"/><rect x="1526" y="873.0" width="58" height="3.2" fill="#e9e9e9"/><rect x="1526" y="874.3" width="58" height=".7" fill="#a8a8a8"/><rect x="1526" y="884.8" width="58" height="3.2" fill="#e9e9e9"/><rect x="1526" y="886.1" width="58" height=".7" fill="#a8a8a8"/><rect x="1526" y="896.6" width="58" height="3.2" fill="#e9e9e9"/><rect x="1526" y="897.9" width="58" height=".7" fill="#a8a8a8"/><rect x="1526" y="755" width="58" height="3" fill="#d6d6d6"/><rect x="1526" y="764.5" width="58" height="2.3" fill="#e4e4e4"/><rect x="1523.8" y="668.5" width="3.4" height="155" rx="1.5" fill="#9cd3ee"/><rect x="1586.8" y="668.5" width="3.6" height="155" rx="1.5" fill="#9cd3ee"/><path d="M1524.4 668.5 V823" stroke="#e8f4fa" stroke-width="1" stroke-dasharray="3 2"/><path d="M1590 668.5 V823" stroke="#e8f4fa" stroke-width=".8" stroke-dasharray="2 3"/><rect x="974.5" y="908.8" width="618.5" height="1.2" fill="#c9ccd1"/><rect x="992.3" y="910" width="7.4" height="5.3" fill="#e9b98a"/><rect x="1041.8" y="910" width="7.4" height="5.3" fill="#e9b98a"/><rect x="1081" y="652" width="59" height="32" fill="#dfeefa" opacity=".75"/><rect x="1290.5" y="652" width="89" height="32" fill="#dfeefa" opacity=".75"/><path d="M1060.8 650 V703 M1065.8 650 V703 M1070.7 650 V703 M1075.7 650 V703 M1080.6 650 V703 M1085.6 650 V703 M1090.5 650 V703 M1095.5 650 V703 M1100.4 650 V703 M1105.4 650 V703 M1110.3 650 V703 M1115.3 650 V703 M1120.2 650 V703 M1125.2 650 V703 M1130.1 650 V703 M1135.1 650 V703 M1140.0 650 V703 M1145.0 650 V703 M1149.9 650 V703 M1154.9 650 V703 M1159.8 650 V703 M1164.8 650 V703 M1169.7 650 V703 M1174.7 650 V703 M1179.6 650 V703 M1184.6 650 V703 M1189.5 650 V703 M1194.5 650 V703 M1199.4 650 V703 M1204.4 650 V703 M1209.3 650 V703 M1214.3 650 V703 M1219.2 650 V703 M1224.2 650 V703 M1229.1 650 V703 M1234.1 650 V703 M1239.0 650 V703 M1244.0 650 V703 M1248.9 650 V703 M1253.9 650 V703 M1258.8 650 V703 M1263.8 650 V703 M1268.7 650 V703 M1273.7 650 V703 M1278.6 650 V703 M1283.6 650 V703 M1288.5 650 V703 M1293.5 650 V703 M1298.4 650 V703 M1303.4 650 V703 M1308.3 650 V703 M1313.3 650 V703 M1318.2 650 V703 M1323.2 650 V703 M1328.1 650 V703 M1333.1 650 V703 M1338.0 650 V703 M1343.0 650 V703 M1347.9 650 V703 M1352.9 650 V703 M1357.8 650 V703 M1362.8 650 V703 M1367.7 650 V703 M1372.7 650 V703 M1377.6 650 V703 M1382.6 650 V703 M1387.5 650 V703 M1392.5 650 V703 M1397.4 650 V703 M1402.4 650 V703" stroke="#e9ecef" stroke-width="2.3" fill="none"/><path d="M1086.6 655 V700 M1091.5 655 V700 M1096.5 655 V700 M1101.4 655 V700 M1106.4 655 V700 M1111.3 655 V700 M1116.3 655 V700 M1121.2 655 V700 M1126.2 655 V700 M1131.1 655 V700 M1136.1 655 V700 M1185.6 655 V700 M1190.5 655 V700 M1195.5 655 V700 M1200.4 655 V700 M1205.4 655 V700 M1254.9 655 V700 M1259.8 655 V700 M1264.8 655 V700 M1269.7 655 V700 M1274.7 655 V700 M1279.6 655 V700 M1284.6 655 V700 M1289.5 655 V700 M1294.5 655 V700 M1299.4 655 V700 M1294.5 655 V700 M1299.4 655 V700 M1304.4 655 V700 M1309.3 655 V700 M1314.3 655 V700 M1319.2 655 V700 M1324.2 655 V700 M1329.1 655 V700 M1334.1 655 V700 M1339.0 655 V700 M1344.0 655 V700 M1348.9 655 V700 M1353.9 655 V700 M1358.8 655 V700 M1363.8 655 V700 M1368.7 655 V700 M1373.7 655 V700 M1378.6 655 V700" stroke="#b9def6" stroke-width=".9" fill="none" opacity=".9"/><rect x="1058" y="647" width="348" height="2.6" fill="#d9dcdf"/><rect x="1060" y="702.6" width="344" height="2.6" fill="#dcdfe2"/><path d="M1061 650 Q1062 668 1055 677 Q1048 690 1056 698 Q1059 702 1061 703" stroke="#eceef0" stroke-width="1.5" fill="none"/><path d="M1403 650 Q1402 668 1408 677 Q1415 690 1407 698 Q1404 702 1403 703" stroke="#eceef0" stroke-width="1.5" fill="none"/><circle cx="1058.2" cy="652.5" r="2.6" stroke="#eceef0" stroke-width="1.3" fill="none"/><circle cx="1405.8" cy="652.5" r="2.6" stroke="#eceef0" stroke-width="1.3" fill="none"/><path d="M2410.6 590.2 V563.9000000000001 A26.3 26.3 0 0 0 2384.2999999999997 590.2 Z M2410.6 590.2 V616.5 A26.3 26.3 0 0 0 2436.9 590.2 Z" fill="#70a5da"/><circle cx="2410.6" cy="590.2" r="26.3" fill="none" stroke="#48688a" stroke-width="1"/><path d="M2410.6 743.2 V716.9000000000001 A26.3 26.3 0 0 0 2384.2999999999997 743.2 Z M2410.6 743.2 V769.5 A26.3 26.3 0 0 0 2436.9 743.2 Z" fill="#70a5da"/><circle cx="2410.6" cy="743.2" r="26.3" fill="none" stroke="#48688a" stroke-width="1"/><path d="M2410.6 909.2 V882.9000000000001 A26.3 26.3 0 0 0 2384.2999999999997 909.2 Z M2410.6 909.2 V935.5 A26.3 26.3 0 0 0 2436.9 909.2 Z" fill="#70a5da"/><circle cx="2410.6" cy="909.2" r="26.3" fill="none" stroke="#48688a" stroke-width="1"/></svg>
<div class="t" style="right:202.4000000000001px;top:552.5px;font-size:28px;line-height:32px;color:#f2f3f4">Roof</div>
<div class="t" style="right:202.4000000000001px;top:598.3px;font-size:28px;line-height:32px;color:#f2f3f4">4.8 m</div>
<div class="t" style="right:202.4000000000001px;top:705.0px;font-size:28px;line-height:32px;color:#f2f3f4">1st Floor</div>
<div class="t" style="right:202.4000000000001px;top:751.2px;font-size:28px;line-height:32px;color:#f2f3f4">2.5 m</div>
<div class="t" style="right:202.4000000000001px;top:871.0px;font-size:28px;line-height:32px;color:#f2f3f4">Ground Floor</div>
<div class="t" style="right:202.4000000000001px;top:917.2px;font-size:28px;line-height:32px;color:#f2f3f4">0 m</div>
<div class="a" style="left:6px;top:137px;width:289px;height:1226px;background:#3b4453;"></div>
<div class="a" style="left:290px;top:155px;width:2.3px;height:1208px;background:#2c3241;"></div>
<div class="a" style="left:292.3px;top:137px;width:2.7px;height:1226px;background:#4f5564;"></div>
<div class="a" style="left:7px;top:137px;width:285px;height:18.5px;background:#1f2430;"></div>
<div class="t " style="left:10px;top:137.8px;letter-spacing:-0.3px;color:#eceef0">Properties</div>
<svg style="left:278px;top:141px" width="12" height="12" viewBox="0 0 12 12"><path d="M1.2 1.2 L10.8 10.8 M10.8 1.2 L1.2 10.8" stroke="#e6e6e8" stroke-width="1.7"/></svg>
<div class="a" style="left:11.5px;top:156px;width:279.5px;height:101px;background:transparent;border:1px solid #465063"></div>
<div class="a" style="left:14px;top:159px;width:68.5px;height:68.5px;background:#3d4656;border:1px solid #4c5669"></div>
<svg style="left:33px;top:177px" width="32" height="33" viewBox="0 0 32 33"><path d="M16 .8 L31.5 18 H.5 Z" fill="#e2e2e2"/><rect x="6.6" y="16.6" width="18.4" height="15" fill="#3d4656" stroke="#d9d9d9" stroke-width="1.4"/></svg>
<div class="t " style="left:87.5px;top:178.0px;letter-spacing:-0.3px">Elevation</div>
<div class="t " style="left:87.5px;top:195.0px;letter-spacing:-0.25px">Building Elevation</div>
<svg style="left:275px;top:192.5px" width="9" height="5" viewBox="0 0 9 5"><path d="M0 0 H9 L4.5 5 Z" fill="#606a7b"/></svg>
<div class="t " style="left:13px;top:234.3px;letter-spacing:-0.42px">Elevation: West</div>
<div class="a" style="left:10px;top:253.5px;width:206px;height:1.5px;background:#5d687d;"></div>
<svg style="left:203px;top:238.5px" width="9" height="6" viewBox="0 0 9 6"><path d="M.7 .7 L4.5 4.7 L8.3 .7" stroke="#6f7a8c" stroke-width="1.3" fill="none"/></svg>
<svg style="left:219px;top:235.5px" width="12" height="12" viewBox="0 0 12 12"><rect x=".3" y=".8" width="4.4" height="4.2" fill="#e4e4e4"/><rect x="5.8" y=".8" width="4.4" height="4.2" fill="#e4e4e4"/><rect x=".3" y="6" width="4.4" height="4.2" fill="#e4e4e4"/><rect x="5.8" y="6" width="4.4" height="4.2" fill="#e4e4e4"/><path d="M.3 11.2 H11 M11.2 0 V5" stroke="#e4e4e4" stroke-width="1"/><path d="M6.5 7.3 H9.5 M6.5 8.9 H9.5 M1 2 H4" stroke="#3b4453" stroke-width=".8"/></svg>
<div class="t " style="left:234px;top:234.3px;letter-spacing:-0.35px">Edit Type</div>
<div class="a" style="left:143px;top:278.54999999999995px;width:1px;height:803.7px;background:#434c5c;"></div>
<div class="a" style="left:277px;top:278.54999999999995px;width:1px;height:803.7px;background:#434c5c;"></div>
<div class="a" style="left:9.5px;top:258.1px;width:281.5px;height:19.8px;background:#1f2430;"></div>
<div class="t b" style="left:10.8px;top:260.8px;letter-spacing:-0.35px">Graphics</div>
<svg style="left:280.5px;top:260.6px" width="6" height="8" viewBox="0 0 6 8"><path d="M.6 3.2 L3 .8 L5.4 3.2 M.6 6.8 L3 4.4 L5.4 6.8" stroke="#d4d6da" stroke-width="1" fill="none"/></svg>
<div class="a" style="left:9.5px;top:299.3px;width:281.5px;height:1px;background:#434c5c;"></div>
<div class="t " style="left:17.5px;top:281.7px;color:#e6e8eb;letter-spacing:-0.3px">View Scale</div>
<div class="a" style="left:144px;top:280.3px;width:133.5px;height:20.2px;background:transparent;border:1px solid #b3b8c1"></div>
<div class="t " style="left:149.5px;top:281.7px;letter-spacing:-0.2px">1 : 100</div>
<div class="a" style="left:9.5px;top:320.4px;width:281.5px;height:1px;background:#434c5c;"></div>
<div class="t " style="left:17.5px;top:302.9px;color:#737d8d;letter-spacing:-0.3px">Scale Value&nbsp;&nbsp;&nbsp;&nbsp;1:</div>
<div class="t " style="left:145.5px;top:302.9px;color:#737d8d;letter-spacing:-0.3px">100</div>
<div class="a" style="left:9.5px;top:341.6px;width:281.5px;height:1px;background:#434c5c;"></div>
<div class="t " style="left:17.5px;top:324.0px;color:#e6e8eb;letter-spacing:-0.3px">Display Model</div>
<div class="t " style="left:145.5px;top:324.0px;color:#e6e8eb;letter-spacing:-0.3px">Normal</div>
<div class="a" style="left:9.5px;top:362.8px;width:281.5px;height:1px;background:#434c5c;"></div>
<div class="t " style="left:17.5px;top:345.2px;color:#e6e8eb;letter-spacing:-0.3px">Detail Level</div>
<div class="t " style="left:145.5px;top:345.2px;color:#e6e8eb;letter-spacing:-0.3px">Fine</div>
<div class="a" style="left:9.5px;top:383.9px;width:281.5px;height:1px;background:#434c5c;"></div>
<div class="t " style="left:17.5px;top:366.3px;color:#e6e8eb;letter-spacing:-0.3px">Parts Visibility</div>
<div class="t " style="left:145.5px;top:366.3px;color:#e6e8eb;letter-spacing:-0.3px">Show Original</div>
<div class="a" style="left:9.5px;top:405.0px;width:281.5px;height:1px;background:#434c5c;"></div>
<div class="t " style="left:17.5px;top:387.5px;color:#e6e8eb;letter-spacing:-0.29px">Visibility/Graphics O...</div>
<div class="a" style="left:144px;top:386.1px;width:133.5px;height:19.2px;background:#3a4352;border:1px solid #5c677b"></div>
<div class="t c" style="left:210.5px;top:388.5px;letter-spacing:-0.25px">Edit...</div>
<div class="a" style="left:9.5px;top:426.2px;width:281.5px;height:1px;background:#434c5c;"></div>
<div class="t " style="left:17.5px;top:408.6px;color:#e6e8eb;letter-spacing:-0.31px">Graphic Display Opti...</div>
<div class="a" style="left:144px;top:407.2px;width:133.5px;height:19.2px;background:#3a4352;border:1px solid #5c677b"></div>
<div class="t c" style="left:210.5px;top:409.6px;letter-spacing:-0.25px">Edit...</div>
<div class="a" style="left:9.5px;top:447.3px;width:281.5px;height:1px;background:#434c5c;"></div>
<div class="t " style="left:17.5px;top:429.8px;color:#e6e8eb;letter-spacing:-0.46px">Hide at scales coarse...</div>
<div class="t " style="left:149.5px;top:429.8px;letter-spacing:-0.2px">1 : 5000</div>
<div class="a" style="left:9.5px;top:468.5px;width:281.5px;height:1px;background:#434c5c;"></div>
<div class="t " style="left:17.5px;top:450.9px;color:#e6e8eb;letter-spacing:-0.3px">Discipline</div>
<div class="t " style="left:145.5px;top:450.9px;color:#e6e8eb;letter-spacing:-0.3px">Architectural</div>
<div class="a" style="left:9.5px;top:489.6px;width:281.5px;height:1px;background:#434c5c;"></div>
<div class="t " style="left:17.5px;top:472.1px;color:#e6e8eb;letter-spacing:-0.3px">Show Hidden Lines</div>
<div class="t " style="left:145.5px;top:472.1px;color:#e6e8eb;letter-spacing:-0.3px">By Discipline</div>
<div class="a" style="left:9.5px;top:510.8px;width:281.5px;height:1px;background:#434c5c;"></div>
<div class="t " style="left:17.5px;top:493.2px;color:#e6e8eb;letter-spacing:-0.48px">Color Scheme Locati...</div>
<div class="t " style="left:145.5px;top:493.2px;color:#e6e8eb;letter-spacing:-0.3px">Background</div>
<div class="a" style="left:9.5px;top:531.9px;width:281.5px;height:1px;background:#434c5c;"></div>
<div class="t " style="left:17.5px;top:514.4px;color:#e6e8eb;letter-spacing:-0.3px">Color Scheme</div>
<div class="a" style="left:144px;top:513.0px;width:133.5px;height:19.2px;background:#3a4352;border:1px solid #5c677b"></div>
<div class="t c" style="left:210.5px;top:515.4px;letter-spacing:-0.25px">&lt;none&gt;</div>
<div class="a" style="left:9.5px;top:553.1px;width:281.5px;height:1px;background:#434c5c;"></div>
<div class="t " style="left:17.5px;top:535.5px;color:#e6e8eb;letter-spacing:-0.34px">Default Analysis Dis...</div>
<div class="t " style="left:145.5px;top:535.5px;color:#e6e8eb;letter-spacing:-0.3px">None</div>
<div class="a" style="left:9.5px;top:574.2px;width:281.5px;height:1px;background:#434c5c;"></div>
<div class="t " style="left:17.5px;top:556.7px;color:#e6e8eb;letter-spacing:-0.3px">Sun Path</div>
<div class="a" style="left:147px;top:557.7px;width:13px;height:13px;background:transparent;border:1px solid #8c94a2"></div>
<div class="a" style="left:9.5px;top:575.4px;width:281.5px;height:19.8px;background:#1f2430;"></div>
<div class="t b" style="left:10.8px;top:578.1px;letter-spacing:-0.35px">Extents</div>
<svg style="left:280.5px;top:577.9px" width="6" height="8" viewBox="0 0 6 8"><path d="M.6 3.2 L3 .8 L5.4 3.2 M.6 6.8 L3 4.4 L5.4 6.8" stroke="#d4d6da" stroke-width="1" fill="none"/></svg>
<div class="a" style="left:9.5px;top:616.5px;width:281.5px;height:1px;background:#434c5c;"></div>
<div class="t " style="left:17.5px;top:599.0px;color:#e6e8eb;letter-spacing:-0.3px">Crop View</div>
<div class="a" style="left:147px;top:600.0px;width:13px;height:13px;background:transparent;border:1px solid #8c94a2"></div>
<div class="a" style="left:9.5px;top:637.7px;width:281.5px;height:1px;background:#434c5c;"></div>
<div class="t " style="left:17.5px;top:620.1px;color:#e6e8eb;letter-spacing:-0.3px">Crop Region Visible</div>
<div class="a" style="left:147px;top:621.1px;width:13px;height:13px;background:transparent;border:1px solid #8c94a2"></div>
<div class="a" style="left:9.5px;top:658.8px;width:281.5px;height:1px;background:#434c5c;"></div>
<div class="t " style="left:17.5px;top:641.3px;color:#e6e8eb;letter-spacing:-0.3px">Annotation Crop</div>
<div class="a" style="left:147px;top:642.3px;width:13px;height:13px;background:transparent;border:1px solid #8c94a2"></div>
<div class="a" style="left:9.5px;top:680.0px;width:281.5px;height:1px;background:#434c5c;"></div>
<div class="t " style="left:17.5px;top:662.5px;color:#e6e8eb;letter-spacing:-0.3px">Far Clipping</div>
<div class="a" style="left:144px;top:661.0px;width:133.5px;height:19.2px;background:#3a4352;border:1px solid #5c677b"></div>
<div class="t c" style="left:210.5px;top:663.5px;letter-spacing:-0.25px">No clip</div>
<div class="a" style="left:9.5px;top:701.1px;width:281.5px;height:1px;background:#434c5c;"></div>
<div class="t " style="left:17.5px;top:683.6px;color:#737d8d;letter-spacing:-0.3px">Far Clip Offset</div>
<div class="t " style="left:145.5px;top:683.6px;color:#737d8d;letter-spacing:-0.3px">35.6533 m</div>
<div class="a" style="left:9.5px;top:722.3px;width:281.5px;height:1px;background:#434c5c;"></div>
<div class="t " style="left:17.5px;top:704.8px;color:#e6e8eb;letter-spacing:-0.3px">Scope Box</div>
<div class="t " style="left:145.5px;top:704.8px;color:#e6e8eb;letter-spacing:-0.3px">None</div>
<div class="a" style="left:9.5px;top:743.4px;width:281.5px;height:1px;background:#434c5c;"></div>
<div class="t " style="left:17.5px;top:725.9px;color:#e6e8eb;letter-spacing:-0.3px">Associated Datum</div>
<div class="t " style="left:145.5px;top:725.9px;color:#e6e8eb;letter-spacing:-0.3px">None</div>
<div class="a" style="left:9.5px;top:744.5px;width:281.5px;height:19.8px;background:#1f2430;"></div>
<div class="t b" style="left:10.8px;top:747.2px;letter-spacing:-0.35px">Identity Data</div>
<svg style="left:280.5px;top:747.0px" width="6" height="8" viewBox="0 0 6 8"><path d="M.6 3.2 L3 .8 L5.4 3.2 M.6 6.8 L3 4.4 L5.4 6.8" stroke="#d4d6da" stroke-width="1" fill="none"/></svg>
<div class="a" style="left:9.5px;top:785.8px;width:281.5px;height:1px;background:#434c5c;"></div>
<div class="t " style="left:17.5px;top:768.2px;color:#e6e8eb;letter-spacing:-0.3px">View Template</div>
<div class="a" style="left:144px;top:766.8px;width:133.5px;height:19.2px;background:#3a4352;border:1px solid #5c677b"></div>
<div class="t c" style="left:210.5px;top:769.2px;letter-spacing:-0.25px">&lt;None&gt;</div>
<div class="a" style="left:9.5px;top:806.9px;width:281.5px;height:1px;background:#434c5c;"></div>
<div class="t " style="left:17.5px;top:789.4px;color:#e6e8eb;letter-spacing:-0.3px">View Name</div>
<div class="t " style="left:145.5px;top:789.4px;color:#e6e8eb;letter-spacing:-0.3px">West</div>
<div class="a" style="left:9.5px;top:828.0px;width:281.5px;height:1px;background:#434c5c;"></div>
<div class="t " style="left:17.5px;top:810.5px;color:#737d8d;letter-spacing:-0.3px">Dependency</div>
<div class="t " style="left:145.5px;top:810.5px;color:#737d8d;letter-spacing:-0.3px">Independent</div>
<div class="a" style="left:9.5px;top:849.2px;width:281.5px;height:1px;background:#434c5c;"></div>
<div class="t " style="left:17.5px;top:831.6px;color:#e6e8eb;letter-spacing:-0.3px">Title on Sheet</div>
<div class="a" style="left:9.5px;top:870.3px;width:281.5px;height:1px;background:#434c5c;"></div>
<div class="t " style="left:17.5px;top:852.8px;color:#737d8d;letter-spacing:-0.52px">Referencing Sheet C...</div>
<div class="t " style="left:145.5px;top:852.8px;color:#737d8d;letter-spacing:-0.3px">&lt;None&gt;</div>
<div class="a" style="left:9.5px;top:891.5px;width:281.5px;height:1px;background:#434c5c;"></div>
<div class="t " style="left:17.5px;top:873.9px;color:#737d8d;letter-spacing:-0.3px">Referencing Sheet</div>
<div class="a" style="left:9.5px;top:912.6px;width:281.5px;height:1px;background:#434c5c;"></div>
<div class="t " style="left:17.5px;top:895.1px;color:#737d8d;letter-spacing:-0.3px">Referencing Detail</div>
<div class="a" style="left:9.5px;top:913.8px;width:281.5px;height:19.8px;background:#1f2430;"></div>
<div class="t b" style="left:10.8px;top:916.5px;letter-spacing:-0.35px">Phasing</div>
<svg style="left:280.5px;top:916.2px" width="6" height="8" viewBox="0 0 6 8"><path d="M.6 3.2 L3 .8 L5.4 3.2 M.6 6.8 L3 4.4 L5.4 6.8" stroke="#d4d6da" stroke-width="1" fill="none"/></svg>
<div class="a" style="left:9.5px;top:954.9px;width:281.5px;height:1px;background:#434c5c;"></div>
<div class="t " style="left:17.5px;top:937.4px;color:#e6e8eb;letter-spacing:-0.3px">Phase Filter</div>
<div class="t " style="left:145.5px;top:937.4px;color:#e6e8eb;letter-spacing:-0.3px">Show All</div>
<div class="a" style="left:9.5px;top:976.1px;width:281.5px;height:1px;background:#434c5c;"></div>
<div class="t " style="left:17.5px;top:958.5px;color:#e6e8eb;letter-spacing:-0.3px">Phase</div>
<div class="t " style="left:145.5px;top:958.5px;color:#e6e8eb;letter-spacing:-0.3px">New Construction</div>
<div class="a" style="left:9.5px;top:977.2px;width:281.5px;height:19.8px;background:#1f2430;"></div>
<div class="t b" style="left:10.8px;top:979.9px;letter-spacing:-0.35px">View to Sheet Positioning</div>
<svg style="left:280.5px;top:979.7px" width="6" height="8" viewBox="0 0 6 8"><path d="M.6 3.2 L3 .8 L5.4 3.2 M.6 6.8 L3 4.4 L5.4 6.8" stroke="#d4d6da" stroke-width="1" fill="none"/></svg>
<div class="a" style="left:9.5px;top:1018.4px;width:281.5px;height:1px;background:#434c5c;"></div>
<div class="t " style="left:17.5px;top:1000.9px;color:#e6e8eb;letter-spacing:-0.3px">Saved Position</div>
<div class="t " style="left:145.5px;top:1000.9px;color:#e6e8eb;letter-spacing:-0.3px">&lt;None&gt;</div>
<div class="a" style="left:9.5px;top:1039.5px;width:281.5px;height:1px;background:#434c5c;"></div>
<div class="t " style="left:17.5px;top:1022.0px;color:#737d8d;letter-spacing:-0.3px">View Anchor</div>
<div class="a" style="left:9.5px;top:1060.7px;width:281.5px;height:1px;background:#434c5c;"></div>
<div class="t " style="left:17.5px;top:1043.1px;color:#737d8d;letter-spacing:-0.3px">View Position X</div>
<div class="a" style="left:9.5px;top:1081.8px;width:281.5px;height:1px;background:#434c5c;"></div>
<div class="t " style="left:17.5px;top:1064.3px;color:#737d8d;letter-spacing:-0.3px">View Position Y</div>
<div class="a" style="left:8px;top:1336.5px;width:283px;height:25.2px;background:#2e3543;"></div>
<div class="a" style="left:10.5px;top:1337.7px;width:21.7px;height:22.3px;background:#3d83b0;"></div>
<svg style="left:10.5px;top:1337.7px" width="22" height="22.3" viewBox="0 0 19 19"><path d="M4 5.5 H9.5 M4 8 H8.5 M4 10.5 H9.5 M4 13 H9.5" stroke="#6fb2dc" stroke-width="1.1"/><path d="M13.3 4.5 V14.5" stroke="#e8f2f8" stroke-width="1.1"/><path d="M11.4 6.3 L13.3 3.6 L15.2 6.3 Z M11.4 12.7 L13.3 15.4 L15.2 12.7 Z" fill="#e8f2f8"/></svg>
<div class="a" style="left:35.7px;top:1337.7px;width:22.2px;height:22.3px;background:#353c4a;"></div>
<svg style="left:35.7px;top:1337.7px" width="22.2" height="22.3" viewBox="0 0 19 19"><text x="2.6" y="9" font-family="Liberation Sans" font-size="7.8" font-weight="bold" fill="#7f9cc4">A</text><text x="2.6" y="16.3" font-family="Liberation Sans" font-size="7.8" font-weight="bold" fill="#d8dadf">Z</text><path d="M12.8 3.2 V14.5" stroke="#e8eaee" stroke-width="1.1"/><path d="M10.9 12.8 L12.8 15.6 L14.7 12.8 Z" fill="#e8eaee"/></svg>
<div class="a" style="left:61.5px;top:1337.7px;width:22.2px;height:22.3px;background:#353c4a;"></div>
<svg style="left:61.5px;top:1337.7px" width="22.2" height="22.3" viewBox="0 0 19 19"><text x="2.6" y="9" font-family="Liberation Sans" font-size="7.8" font-weight="bold" fill="#d8dadf">Z</text><text x="2.6" y="16.3" font-family="Liberation Sans" font-size="7.8" font-weight="bold" fill="#6f9fd0">A</text><path d="M12.8 3.2 V14.5" stroke="#e8eaee" stroke-width="1.1"/><path d="M10.9 12.8 L12.8 15.6 L14.7 12.8 Z" fill="#e8eaee"/></svg>
<div class="a" style="left:212px;top:1338.3px;width:76.3px;height:20px;background:#2f3644;border:1px solid #464f5f;border-radius:2px"></div>
<div class="t c" style="left:250.5px;top:1342.2px;color:#6f7888;letter-spacing:-0.2px">Apply</div>
<div class="a" style="left:309.5px;top:715.3px;width:286px;height:612px;background:#3b4454;border-radius:5px;border:1px solid #3f4753;box-shadow:0 0 3px rgba(0,0,0,.35)"></div>
<div class="a" style="left:310.5px;top:735px;width:3px;height:591px;background:#313846;"></div>
<div class="a" style="left:310.5px;top:716.3px;width:284px;height:19.5px;background:#232935;border-radius:4px 4px 0 0"></div>
<div class="t " style="left:313.2px;top:717.5px;letter-spacing:-0.31px;color:#eceef0">Project Browser - 2 Old maidstone Rd, DA14...</div>
<svg style="left:581.5px;top:720.5px" width="11" height="11" viewBox="0 0 11 11"><path d="M1 1 L10 10 M10 1 L1 10" stroke="#e0e2e6" stroke-width="1.8"/></svg>
<div class="a" style="left:310.5px;top:735.5px;width:284px;height:25px;background:#14171e;"></div>
<div class="a" style="left:314.5px;top:736px;width:24.5px;height:24.5px;background:#3b4454;"></div>
<svg style="left:318px;top:739.5px" width="18" height="18" viewBox="0 0 18 18"><path d="M.5 8.5 L8 1.5 L15.5 8.5 H14 V15.5 H2.5 V8.5 Z" fill="#e6e6e6"/><path d="M8 3.8 L12.5 8 V15 H3.8 V8 Z" fill="#5b6270"/><rect x="4.5" y="9.5" width="2" height="6" fill="#e2c270"/><rect x="7" y="9.5" width="2" height="6" fill="#8ab56a"/><rect x="11" y="9" width="6" height="7" fill="#3b4454"/><path d="M11.5 10.5 H17 M11.5 12.8 H17 M11.5 15 H17" stroke="#7db8ec" stroke-width="1.3"/><rect x="12" y="3" width="1.6" height="2.2" fill="#e6e6e6"/></svg>
<svg style="left:343px;top:739.5px" width="17" height="17" viewBox="0 0 17 17"><path d="M.6 4.5 V.6 H4.5 M12.5 .6 H16.4 V4.5 M16.4 12.5 V16.4 H12.5 M4.5 16.4 H.6 V12.5" stroke="#dfe1e5" stroke-width="1.2" fill="none"/><path d="M4 6.5 L7 3.5 H13 V10 L10.5 13.5 H4 Z" fill="#e4e4e4"/><path d="M10.5 6.5 L13 3.5 V10 L10.5 13.5 Z" fill="#bdbdbd"/><path d="M4 6.5 L7 3.5 H13 L10.5 6.5 Z" fill="#f6f6f6"/></svg>
<svg style="left:368px;top:739.5px" width="18" height="18" viewBox="0 0 18 18"><rect x=".5" y=".5" width="17" height="17" fill="#ececec"/><rect x=".5" y=".5" width="17" height="2.6" fill="#bdbdbd"/><rect x="3" y="6" width="3.2" height="3.2" fill="none" stroke="#555" stroke-width="1"/><circle cx="4.6" cy="13.2" r="1.7" fill="none" stroke="#555" stroke-width="1"/><path d="M8.5 6.5 H15 M8.5 8.8 H13 M8.5 12 H15 M8.5 14.3 H15" stroke="#8a8a8a" stroke-width="1.1"/></svg>
<svg style="left:393.5px;top:739.5px" width="18" height="18" viewBox="0 0 18 18"><rect x=".5" y="2.5" width="16.5" height="13" fill="#14171e" stroke="#e2e2e2" stroke-width="1.3"/><path d="M.5 5.8 H17 M.5 9 H17 M.5 12.2 H17 M5.5 2.5 V15.5" stroke="#e2e2e2" stroke-width="1.2"/><rect x=".5" y="2.5" width="16.5" height="2.6" fill="#e2e2e2"/></svg>
<svg style="left:418.5px;top:739.5px" width="18" height="18" viewBox="0 0 18 18"><path d="M.8 16 V6 H5.5 L8 2 Q9.5 .6 11 2 L16.5 11 Q17.5 13.5 16.5 15 Q16 16 14.5 16 Z" fill="#e2e2e2"/><circle cx="14" cy="13" r="1.7" fill="none" stroke="#7a7a7a" stroke-width=".9"/><path d="M6 6 L12 14" stroke="#9a9a9a" stroke-width=".9"/></svg>
<svg style="left:445px;top:739.5px" width="18" height="18" viewBox="0 0 18 18"><path d="M.8 .8 H16.2 V16.2 H.8 Z" fill="#e2e2e2"/><rect x=".8" y=".8" width="7.2" height="7.2" fill="#e2e2e2" stroke="#14171e" stroke-width="1.2"/></svg>
<svg style="left:469.5px;top:739.5px" width="18" height="18" viewBox="0 0 18 18"><path d="M3.5 .8 H.8 V17.2 H3.5 M13.5 .8 H16.2 V17.2 H13.5" stroke="#e2e2e2" stroke-width="1.4" fill="none"/><circle cx="7" cy="7" r="4.3" fill="#dcdcdc"/><rect x="6.5" y="8" width="7.5" height="7" fill="#e8e8e8"/><path d="M5 6 H9 L7 9 Z" fill="none" stroke="#9a9a9a" stroke-width=".7"/></svg>
<svg style="left:495.5px;top:739.5px" width="18" height="18" viewBox="0 0 18 18"><g transform="rotate(-35 9 9)" fill="none" stroke="#c9936a" stroke-width="1.7"><rect x="0" y="6" width="10" height="6" rx="3"/><rect x="8" y="6" width="10" height="6" rx="3"/></g></svg>
<div class="a" style="left:322.5px;top:771.5px;width:264px;height:22.5px;background:#2d3442;"></div>
<svg style="left:330px;top:774px" width="19" height="19" viewBox="0 0 19 19"><circle cx="6.8" cy="6.8" r="5.2" fill="none" stroke="#9aa1ae" stroke-width="1.5"/><path d="M10.5 10.8 L16.5 17" stroke="#9aa1ae" stroke-width="2"/></svg>
<div class="t " style="left:356px;top:775.0px;color:#7e8797;font-weight:bold;letter-spacing:-0.45px;font-size:12.5px">Search</div>
<div class="a" style="left:576.5px;top:804px;width:17.5px;height:17.5px;background:#353b4a;"></div>
<svg style="left:581px;top:809px" width="10" height="6" viewBox="0 0 10 6"><path d="M.8 5.2 L5 1 L9.2 5.2" stroke="#aeb4bf" stroke-width="1.5" fill="none"/></svg>
<div class="a" style="left:576.5px;top:821.5px;width:17.5px;height:504.5px;background:#353b4a;border-radius:0 0 4px 0"></div>
<div class="a" style="left:576.5px;top:821.5px;width:17.5px;height:1px;background:#3e4553;"></div>
<div class="a" style="left:576.5px;top:1305.3px;width:17.5px;height:1px;background:#3e4553;"></div>
<div class="a" style="left:581.5px;top:828.5px;width:7px;height:385px;background:#7a8498;border-radius:3.5px"></div>
<svg style="left:580.7px;top:1312.6px" width="10" height="6" viewBox="0 0 10 6"><path d="M.8 .8 L5 5 L9.2 .8" stroke="#aeb4bf" stroke-width="1.5" fill="none"/></svg>
<div class="a" style="left:323px;top:825px;width:1px;height:465px;background:#434c5c;"></div>
<svg style="left:318.5px;top:809.7px" width="9" height="9" viewBox="0 0 9 9"><path d="M.3 4.5 H8.7" stroke="#c3c7ce" stroke-width="1.6"/></svg>
<svg style="left:336px;top:805.9000000000001px" width="17" height="17" viewBox="0 0 17 17"><path d="M.6 4.5 V.6 H4.5 M12.5 .6 H16.4 V4.5 M16.4 12.5 V16.4 H12.5 M4.5 16.4 H.6 V12.5" stroke="#dfe1e5" stroke-width="1.2" fill="none"/><path d="M4 6.5 L7 3.5 H13 V10 L10.5 13.5 H4 Z" fill="#e4e4e4"/><path d="M10.5 6.5 L13 3.5 V10 L10.5 13.5 Z" fill="#bdbdbd"/><path d="M4 6.5 L7 3.5 H13 L10.5 6.5 Z" fill="#f6f6f6"/></svg>
<div class="t " style="left:357.2px;top:806.5px;letter-spacing:-0.33px;color:#e8eaed">Views (all)</div>
<div class="a" style="left:324px;top:835px;width:9px;height:1px;background:#434c5c;"></div>
<svg style="left:335.2px;top:830.9px" width="9" height="9" viewBox="0 0 9 9"><path d="M.3 4.5 H8.7" stroke="#c3c7ce" stroke-width="1.6"/><path d="M4.5 .3 V8.7" stroke="#c3c7ce" stroke-width="1.6"/></svg>
<div class="t " style="left:353px;top:827.6px;letter-spacing:-0.33px;color:#e8eaed">Structural Plans</div>
<div class="a" style="left:324px;top:856px;width:9px;height:1px;background:#434c5c;"></div>
<svg style="left:335.2px;top:852.0px" width="9" height="9" viewBox="0 0 9 9"><path d="M.3 4.5 H8.7" stroke="#c3c7ce" stroke-width="1.6"/></svg>
<div class="a" style="left:340px;top:864px;width:1px;height:142px;background:#434c5c;"></div>
<div class="t " style="left:353px;top:848.8px;letter-spacing:-0.33px;color:#e8eaed">Floor Plans</div>
<div class="a" style="left:341px;top:878px;width:26px;height:1px;background:#434c5c;"></div>
<svg style="left:370px;top:869.1500000000001px" width="17" height="17" viewBox="0 0 17 17"><rect x="3.2" y="3.2" width="10.6" height="10.6" fill="none" stroke="#c8ccd3" stroke-width="1.1"/><path d="M.6 4 V.6 H4 M6 .6 H11 M13 .6 H16.4 V4 M16.4 6 V11 M16.4 13 V16.4 H13 M11 16.4 H6 M4 16.4 H.6 V13 M.6 11 V6" stroke="#c8ccd3" stroke-width="1.1" fill="none"/></svg>
<div class="t " style="left:391px;top:870.0px;letter-spacing:-0.33px;color:#e8eaed">1st Floor</div>
<div class="a" style="left:341px;top:899px;width:26px;height:1px;background:#434c5c;"></div>
<svg style="left:370px;top:890.3000000000001px" width="17" height="17" viewBox="0 0 17 17"><rect x="3.2" y="3.2" width="10.6" height="10.6" fill="#86c3fb"/><rect x="3.2" y="3.2" width="10.6" height="10.6" fill="none" stroke="#c8ccd3" stroke-width="1.1"/><path d="M.6 4 V.6 H4 M6 .6 H11 M13 .6 H16.4 V4 M16.4 6 V11 M16.4 13 V16.4 H13 M11 16.4 H6 M4 16.4 H.6 V13 M.6 11 V6" stroke="#c8ccd3" stroke-width="1.1" fill="none"/></svg>
<div class="t " style="left:391px;top:891.1px;letter-spacing:-0.33px;color:#e8eaed">1st Floor-Proposed</div>
<div class="a" style="left:341px;top:920px;width:26px;height:1px;background:#434c5c;"></div>
<svg style="left:370px;top:911.45px" width="17" height="17" viewBox="0 0 17 17"><rect x="3.2" y="3.2" width="10.6" height="10.6" fill="none" stroke="#c8ccd3" stroke-width="1.1"/><path d="M.6 4 V.6 H4 M6 .6 H11 M13 .6 H16.4 V4 M16.4 6 V11 M16.4 13 V16.4 H13 M11 16.4 H6 M4 16.4 H.6 V13 M.6 11 V6" stroke="#c8ccd3" stroke-width="1.1" fill="none"/></svg>
<div class="t " style="left:391px;top:912.2px;letter-spacing:-0.33px;color:#e8eaed">Ground Floor</div>
<div class="a" style="left:341px;top:941px;width:26px;height:1px;background:#434c5c;"></div>
<svg style="left:370px;top:932.6px" width="17" height="17" viewBox="0 0 17 17"><rect x="3.2" y="3.2" width="10.6" height="10.6" fill="#86c3fb"/><rect x="3.2" y="3.2" width="10.6" height="10.6" fill="none" stroke="#c8ccd3" stroke-width="1.1"/><path d="M.6 4 V.6 H4 M6 .6 H11 M13 .6 H16.4 V4 M16.4 6 V11 M16.4 13 V16.4 H13 M11 16.4 H6 M4 16.4 H.6 V13 M.6 11 V6" stroke="#c8ccd3" stroke-width="1.1" fill="none"/></svg>
<div class="t " style="left:391px;top:933.4px;letter-spacing:-0.33px;color:#e8eaed">Ground Floor-Existing</div>
<div class="a" style="left:341px;top:962px;width:26px;height:1px;background:#434c5c;"></div>
<svg style="left:370px;top:953.75px" width="17" height="17" viewBox="0 0 17 17"><rect x="3.2" y="3.2" width="10.6" height="10.6" fill="#86c3fb"/><rect x="3.2" y="3.2" width="10.6" height="10.6" fill="none" stroke="#c8ccd3" stroke-width="1.1"/><path d="M.6 4 V.6 H4 M6 .6 H11 M13 .6 H16.4 V4 M16.4 6 V11 M16.4 13 V16.4 H13 M11 16.4 H6 M4 16.4 H.6 V13 M.6 11 V6" stroke="#c8ccd3" stroke-width="1.1" fill="none"/></svg>
<div class="t " style="left:391px;top:954.5px;letter-spacing:-0.33px;color:#e8eaed">Ground Floor-Proposed</div>
<div class="a" style="left:341px;top:983px;width:26px;height:1px;background:#434c5c;"></div>
<svg style="left:370px;top:974.9000000000001px" width="17" height="17" viewBox="0 0 17 17"><rect x="3.2" y="3.2" width="10.6" height="10.6" fill="none" stroke="#c8ccd3" stroke-width="1.1"/><path d="M.6 4 V.6 H4 M6 .6 H11 M13 .6 H16.4 V4 M16.4 6 V11 M16.4 13 V16.4 H13 M11 16.4 H6 M4 16.4 H.6 V13 M.6 11 V6" stroke="#c8ccd3" stroke-width="1.1" fill="none"/></svg>
<div class="t " style="left:391px;top:975.7px;letter-spacing:-0.33px;color:#e8eaed">Roof</div>
<div class="a" style="left:341px;top:1005px;width:26px;height:1px;background:#434c5c;"></div>
<svg style="left:370px;top:996.0500000000001px" width="17" height="17" viewBox="0 0 17 17"><rect x="3.2" y="3.2" width="10.6" height="10.6" fill="none" stroke="#c8ccd3" stroke-width="1.1"/><path d="M.6 4 V.6 H4 M6 .6 H11 M13 .6 H16.4 V4 M16.4 6 V11 M16.4 13 V16.4 H13 M11 16.4 H6 M4 16.4 H.6 V13 M.6 11 V6" stroke="#c8ccd3" stroke-width="1.1" fill="none"/></svg>
<div class="t " style="left:391px;top:996.9px;letter-spacing:-0.33px;color:#e8eaed">Site</div>
<div class="a" style="left:324px;top:1026px;width:9px;height:1px;background:#434c5c;"></div>
<svg style="left:335.2px;top:1021.2px" width="9" height="9" viewBox="0 0 9 9"><path d="M.3 4.5 H8.7" stroke="#c3c7ce" stroke-width="1.6"/><path d="M4.5 .3 V8.7" stroke="#c3c7ce" stroke-width="1.6"/></svg>
<div class="t " style="left:353px;top:1018.0px;letter-spacing:-0.33px;color:#e8eaed">Ceiling Plans</div>
<div class="a" style="left:324px;top:1047px;width:9px;height:1px;background:#434c5c;"></div>
<svg style="left:335.2px;top:1042.3px" width="9" height="9" viewBox="0 0 9 9"><path d="M.3 4.5 H8.7" stroke="#c3c7ce" stroke-width="1.6"/></svg>
<div class="a" style="left:340px;top:1054px;width:1px;height:57px;background:#434c5c;"></div>
<div class="t " style="left:353px;top:1039.1px;letter-spacing:-0.33px;color:#e8eaed">3D Views</div>
<div class="a" style="left:341px;top:1068px;width:26px;height:1px;background:#434c5c;"></div>
<svg style="left:370px;top:1059.5px" width="17" height="17" viewBox="0 0 17 17"><rect x="3.2" y="3.2" width="10.6" height="10.6" fill="none" stroke="#c8ccd3" stroke-width="1.1"/><path d="M.6 4 V.6 H4 M6 .6 H11 M13 .6 H16.4 V4 M16.4 6 V11 M16.4 13 V16.4 H13 M11 16.4 H6 M4 16.4 H.6 V13 M.6 11 V6" stroke="#c8ccd3" stroke-width="1.1" fill="none"/></svg>
<div class="t " style="left:391px;top:1060.3px;letter-spacing:-0.33px;color:#e8eaed">3D</div>
<div class="a" style="left:341px;top:1089px;width:26px;height:1px;background:#434c5c;"></div>
<svg style="left:370px;top:1080.65px" width="17" height="17" viewBox="0 0 17 17"><rect x="3.2" y="3.2" width="10.6" height="10.6" fill="none" stroke="#c8ccd3" stroke-width="1.1"/><path d="M.6 4 V.6 H4 M6 .6 H11 M13 .6 H16.4 V4 M16.4 6 V11 M16.4 13 V16.4 H13 M11 16.4 H6 M4 16.4 H.6 V13 M.6 11 V6" stroke="#c8ccd3" stroke-width="1.1" fill="none"/></svg>
<div class="t " style="left:391px;top:1081.5px;letter-spacing:-0.33px;color:#e8eaed">3D View</div>
<div class="a" style="left:341px;top:1110px;width:26px;height:1px;background:#434c5c;"></div>
<svg style="left:370px;top:1101.8px" width="17" height="17" viewBox="0 0 17 17"><rect x="3.2" y="3.2" width="10.6" height="10.6" fill="none" stroke="#c8ccd3" stroke-width="1.1"/><path d="M.6 4 V.6 H4 M6 .6 H11 M13 .6 H16.4 V4 M16.4 6 V11 M16.4 13 V16.4 H13 M11 16.4 H6 M4 16.4 H.6 V13 M.6 11 V6" stroke="#c8ccd3" stroke-width="1.1" fill="none"/></svg>
<div class="t " style="left:391px;top:1102.6px;letter-spacing:-0.33px;color:#e8eaed">{3D}</div>
<div class="a" style="left:324px;top:1131px;width:9px;height:1px;background:#434c5c;"></div>
<svg style="left:335.2px;top:1127.0px" width="9" height="9" viewBox="0 0 9 9"><path d="M.3 4.5 H8.7" stroke="#c3c7ce" stroke-width="1.6"/></svg>
<div class="a" style="left:340px;top:1138px;width:1px;height:79px;background:#434c5c;"></div>
<div class="t " style="left:353px;top:1123.8px;letter-spacing:-0.33px;color:#e8eaed">Elevations (Building Elevation)</div>
<div class="a" style="left:341px;top:1153px;width:26px;height:1px;background:#434c5c;"></div>
<svg style="left:370px;top:1144.1px" width="17" height="17" viewBox="0 0 17 17"><rect x="3.2" y="3.2" width="10.6" height="10.6" fill="none" stroke="#c8ccd3" stroke-width="1.1"/><path d="M.6 4 V.6 H4 M6 .6 H11 M13 .6 H16.4 V4 M16.4 6 V11 M16.4 13 V16.4 H13 M11 16.4 H6 M4 16.4 H.6 V13 M.6 11 V6" stroke="#c8ccd3" stroke-width="1.1" fill="none"/></svg>
<div class="t " style="left:391px;top:1144.9px;letter-spacing:-0.33px;color:#e8eaed">East</div>
<div class="a" style="left:341px;top:1174px;width:26px;height:1px;background:#434c5c;"></div>
<svg style="left:370px;top:1165.25px" width="17" height="17" viewBox="0 0 17 17"><rect x="3.2" y="3.2" width="10.6" height="10.6" fill="none" stroke="#c8ccd3" stroke-width="1.1"/><path d="M.6 4 V.6 H4 M6 .6 H11 M13 .6 H16.4 V4 M16.4 6 V11 M16.4 13 V16.4 H13 M11 16.4 H6 M4 16.4 H.6 V13 M.6 11 V6" stroke="#c8ccd3" stroke-width="1.1" fill="none"/></svg>
<div class="t " style="left:391px;top:1166.0px;letter-spacing:-0.33px;color:#e8eaed">North</div>
<div class="a" style="left:341px;top:1195px;width:26px;height:1px;background:#434c5c;"></div>
<svg style="left:370px;top:1186.4px" width="17" height="17" viewBox="0 0 17 17"><rect x="3.2" y="3.2" width="10.6" height="10.6" fill="none" stroke="#c8ccd3" stroke-width="1.1"/><path d="M.6 4 V.6 H4 M6 .6 H11 M13 .6 H16.4 V4 M16.4 6 V11 M16.4 13 V16.4 H13 M11 16.4 H6 M4 16.4 H.6 V13 M.6 11 V6" stroke="#c8ccd3" stroke-width="1.1" fill="none"/></svg>
<div class="t " style="left:391px;top:1187.2px;letter-spacing:-0.33px;color:#e8eaed">South</div>
<div class="a" style="left:312.5px;top:1206.6px;width:263.5px;height:19px;background:#323947;"></div>
<div class="a" style="left:341px;top:1216px;width:26px;height:1px;background:#434c5c;"></div>
<svg style="left:370px;top:1207.55px" width="17" height="17" viewBox="0 0 17 17"><rect x="3.2" y="3.2" width="10.6" height="10.6" fill="none" stroke="#c8ccd3" stroke-width="1.1"/><path d="M.6 4 V.6 H4 M6 .6 H11 M13 .6 H16.4 V4 M16.4 6 V11 M16.4 13 V16.4 H13 M11 16.4 H6 M4 16.4 H.6 V13 M.6 11 V6" stroke="#c8ccd3" stroke-width="1.1" fill="none"/></svg>
<div class="t b" style="left:391px;top:1208.3px;letter-spacing:-0.4px">West</div>
<div class="a" style="left:324px;top:1237px;width:9px;height:1px;background:#434c5c;"></div>
<svg style="left:335.2px;top:1232.7px" width="9" height="9" viewBox="0 0 9 9"><path d="M.3 4.5 H8.7" stroke="#c3c7ce" stroke-width="1.6"/><path d="M4.5 .3 V8.7" stroke="#c3c7ce" stroke-width="1.6"/></svg>
<div class="t " style="left:353px;top:1229.5px;letter-spacing:-0.33px;color:#e8eaed">Sections (Building Section)</div>
<svg style="left:335.5px;top:1250.0px" width="17" height="17" viewBox="0 0 17 17"><rect x=".5" y=".5" width="16" height="16" fill="#e8e8e8"/><rect x=".5" y=".5" width="16" height="2.5" fill="#bdbdbd"/><rect x="2.8" y="5.5" width="3" height="3" fill="none" stroke="#555" stroke-width="1"/><circle cx="4.3" cy="12.4" r="1.6" fill="none" stroke="#555" stroke-width="1"/><path d="M8 6 H14 M8 8.2 H12 M8 11.3 H14 M8 13.5 H14" stroke="#8a8a8a" stroke-width="1"/></svg>
<div class="t " style="left:356.2px;top:1250.6px;letter-spacing:-0.33px;color:#e8eaed">Legends</div>
<svg style="left:318.5px;top:1275.0px" width="9" height="9" viewBox="0 0 9 9"><path d="M.3 4.5 H8.7" stroke="#c3c7ce" stroke-width="1.6"/></svg>
<svg style="left:336px;top:1272.5px" width="17" height="14" viewBox="0 0 17 14"><rect x=".6" y=".6" width="15.8" height="12.4" fill="none" stroke="#dcdcdc" stroke-width="1.2"/><rect x=".6" y=".6" width="15.8" height="2.8" fill="#dcdcdc"/><path d="M.6 6.4 H16.4 M.6 9.6 H16.4 M5.6 3 V13 M11 3 V13" stroke="#dcdcdc" stroke-width="1.1"/></svg>
<div class="t " style="left:357.2px;top:1271.8px;letter-spacing:-0.33px;color:#e8eaed">Schedules/Quantities (all)</div>
<div class="a" style="left:324px;top:1301px;width:27px;height:1px;background:#434c5c;"></div>
<svg style="left:353px;top:1292.15px" width="17" height="17" viewBox="0 0 17 17"><rect x="3.2" y="3.2" width="10.6" height="10.6" fill="none" stroke="#c8ccd3" stroke-width="1.1"/><path d="M.6 4 V.6 H4 M6 .6 H11 M13 .6 H16.4 V4 M16.4 6 V11 M16.4 13 V16.4 H13 M11 16.4 H6 M4 16.4 H.6 V13 M.6 11 V6" stroke="#c8ccd3" stroke-width="1.1" fill="none"/></svg>
<div class="t " style="left:374px;top:1293.0px;letter-spacing:-0.33px;color:#e8eaed">Building Data</div>
<div class="a" style="left:311px;top:1314px;width:265px;height:9.5px;overflow:hidden"><div class="t" style="left:46.2px;top:1px;letter-spacing:-0.33px;color:#e8eaed">Sheets (all)</div><svg style="left:25px;top:2px" width="17" height="14" viewBox="0 0 17 14"><path d="M.8 13 V5 H5 L7.5 1 Q9 0 10.5 1 L16 9 Q17 12 15 13 Z" fill="#e2e2e2"/></svg><div class="a" style="left:8px;top:7.5px;width:9px;height:1.6px;background:#c3c7ce"></div></div>
<div class="a" style="left:2538.5px;top:158px;width:18.5px;height:1183.5px;background:#303744;"></div>
<div class="a" style="left:2557px;top:158px;width:3px;height:1204px;background:#2b313d;"></div>
<div class="a" style="left:2538.5px;top:178.5px;width:18.5px;height:1px;background:#3a4250;"></div>
<div class="a" style="left:2538.5px;top:1324px;width:18.5px;height:1px;background:#3a4250;"></div>
<svg style="left:2542.5px;top:165px" width="11" height="7" viewBox="0 0 11 7"><path d="M.8 6 L5.5 1.3 L10.2 6" stroke="#aab0bc" stroke-width="1.6" fill="none"/></svg>
<svg style="left:2542.5px;top:1330px" width="11" height="7" viewBox="0 0 11 7"><path d="M.8 1 L5.5 5.7 L10.2 1" stroke="#aab0bc" stroke-width="1.6" fill="none"/></svg>
<div class="a" style="left:2545px;top:741px;width:6.5px;height:19.5px;background:#8e98ad;border-radius:3px"></div>
<div class="a" style="left:295px;top:1341.5px;width:2262px;height:19.5px;background:#303744;"></div>
<div class="a" style="left:295px;top:1361px;width:2265px;height:1.5px;background:#262c37;"></div>
<div class="a" style="left:1597.5px;top:1346.5px;width:18.5px;height:9px;background:#8e98ad;border-radius:4.5px"></div>
<svg style="left:2526px;top:1345px" width="8" height="12" viewBox="0 0 8 12"><path d="M1.2 1 L6.5 6 L1.2 11" stroke="#aab0bc" stroke-width="1.6" fill="none"/></svg>
<svg style="left:2545px;top:1348px" width="10" height="10" viewBox="0 0 10 10"><rect x="5.5" y="1" width="2.2" height="2.2" fill="#8f96a3"/><rect x="1" y="5.5" width="2.2" height="2.2" fill="#8f96a3"/><rect x="5.5" y="5.5" width="2.2" height="2.2" fill="#8f96a3"/></svg>
<div class="a" style="left:2498px;top:1341.5px;width:1px;height:19.5px;background:#3a4250;"></div>
<div class="t" style="left:321px;top:1343.3px;font-family:'Liberation Serif',serif;font-size:13.5px;color:#b4b9c2;letter-spacing:.2px">1 : 100</div>
<svg style="left:382.5px;top:1342px" width="20" height="20" viewBox="0 0 20 20"><rect x="1.5" y="3" width="17" height="13" fill="#b8b4ae"/><path d="M1.5 5.2 H18.5 M1.5 7.4 H18.5 M1.5 9.6 H18.5 M1.5 11.8 H18.5 M1.5 14 H18.5" stroke="#8e8a86" stroke-width=".9" stroke-dasharray="2.1 2.1"/></svg>
<svg style="left:409.5px;top:1342px" width="20" height="20" viewBox="0 0 20 20"><path d="M2.5 6 L5 2.5 H17.5 V13 L15 16.5 H2.5 Z" fill="#4d9be0"/><path d="M2.5 6 L5 2.5 H17.5 L15 6 Z" fill="#9fd0f8"/><rect x="2.5" y="11" width="12.5" height="5.5" fill="#a9d6fa"/><path d="M15 6 L17.5 2.5 V13 L15 16.5 Z" fill="#3a82c8"/></svg>
<svg style="left:436.0px;top:1342px" width="20" height="20" viewBox="0 0 20 20"><circle cx="8" cy="8.5" r="3.6" fill="#f3c667"/><path d="M8 2 V3.6 M8 13.4 V15 M1.5 8.5 H3.1 M3.4 3.9 L4.6 5.1 M12.6 3.9 L11.4 5.1 M3.4 13.1 L4.6 11.9" stroke="#f3c667" stroke-width="1.1"/><circle cx="14.5" cy="12.3" r="3.4" fill="#5fc8d2"/><rect x="13.0" y="15.4" width="3" height="2.6" rx=".8" fill="#f0f0f0"/></svg>
<svg style="left:462.0px;top:1342px" width="20" height="20" viewBox="0 0 20 20"><circle cx="8" cy="7.5" r="5.3" fill="#c9c9c9"/><path d="M3 15.5 H12.5" stroke="#0f1217" stroke-width="2"/><circle cx="15" cy="12" r="3.4" fill="#5fc8d2"/><rect x="13.5" y="15.1" width="3" height="2.6" rx=".8" fill="#f0f0f0"/></svg>
<svg style="left:490.0px;top:1342px" width="20" height="20" viewBox="0 0 20 20"><path d="M1 11.5 H4 M6 5.5 H16 M6 5.5 V17 M11 2 V4" stroke="#c8ccd3" stroke-width="1.4" fill="none"/><path d="M10.5 11 L15.5 16 M15.5 11 L10.5 16" stroke="#e8505b" stroke-width="1.8"/></svg>
<svg style="left:517.0px;top:1342px" width="20" height="20" viewBox="0 0 20 20"><path d="M1 11.5 H4 M6 5.5 H16 M6 5.5 V17 M11 2 V4" stroke="#c8ccd3" stroke-width="1.4" fill="none"/><circle cx="14" cy="11.5" r="3.4" fill="#5fc8d2"/><rect x="12.5" y="14.6" width="3" height="2.6" rx=".8" fill="#f0f0f0"/></svg>
<svg style="left:543.0px;top:1342px" width="20" height="20" viewBox="0 0 20 20"><circle cx="5.8" cy="12" r="3" fill="none" stroke="#c8ccd3" stroke-width="1.3"/><circle cx="14.2" cy="12" r="3" fill="none" stroke="#c8ccd3" stroke-width="1.3"/><path d="M8.8 12 H11.2 M3.2 10.5 L5 5.5 H6.5 M16.8 10.5 L15 5.5 H13.5" stroke="#c8ccd3" stroke-width="1.2" fill="none"/></svg>
<svg style="left:570.0px;top:1342px" width="20" height="20" viewBox="0 0 20 20"><circle cx="10" cy="8.3" r="4.3" fill="#5fc8d2"/><rect x="8.5" y="12.3" width="3" height="2.6" rx=".8" fill="#f0f0f0"/></svg>
<svg style="left:597.0px;top:1342px" width="20" height="20" viewBox="0 0 20 20"><path d="M3 3.5 H10 L12.5 6 V13.5 H3 Z" fill="#c8ccd3"/><path d="M4.5 6 H9 M4.5 8.2 H10.5 M4.5 10.4 H10.5" stroke="#313846" stroke-width=".9"/><circle cx="14" cy="14" r="3.2" fill="none" stroke="#c8ccd3" stroke-width="1.1" stroke-dasharray="1.8 1.6"/></svg>
<svg style="left:623.0px;top:1342px" width="20" height="20" viewBox="0 0 20 20"><path d="M2.5 16 V6.5 L7 2.5 H16 L12 6.5 H2.5 M12 6.5 V10" stroke="#c8ccd3" stroke-width="1.1" fill="none"/><path d="M3.5 9 V16 M6 9 V16 M8.5 9 V16" stroke="#e07a7a" stroke-width="1"/><circle cx="14.5" cy="12.5" r="3.4" fill="#f3c667"/><rect x="13.0" y="15.6" width="3" height="2.6" rx=".8" fill="#f0f0f0"/></svg>
<svg style="left:650.0px;top:1342px" width="20" height="20" viewBox="0 0 20 20"><path d="M2 2.5 V16 M16.5 2.5 V9 M2 4.5 H16.5 M2 13.5 H9" stroke="#c8ccd3" stroke-width="1.2" fill="none"/><circle cx="15" cy="12.5" r="3.4" fill="#5fc8d2"/><rect x="13.5" y="15.6" width="3" height="2.6" rx=".8" fill="#f0f0f0"/></svg>
<svg style="left:679px;top:1346px" width="7" height="11" viewBox="0 0 7 11"><path d="M5.8 1 L1.2 5.5 L5.8 10" stroke="#9ea5b2" stroke-width="1.5" fill="none"/></svg>
<div class="a" style="left:295px;top:1362.5px;width:2265px;height:3.5px;background:#3b4453;"></div>
<div class="a" style="left:2505px;top:161.5px;width:32.5px;height:115px;background:#696e78;border-radius:3px;box-shadow:0 0 2px rgba(0,0,0,.5)"></div>
<svg style="left:2527.5px;top:163px" width="8" height="8" viewBox="0 0 8 8"><path d="M1 1 L7 7 M7 1 L1 7" stroke="#d8dade" stroke-width="1.1"/></svg>
<svg style="left:2507.5px;top:178px;opacity:.85" width="28" height="28" viewBox="0 0 28 28"><path d="M3 11 Q3 3 12 3 H20 V15 Q20 21 13 21 Q3 21 3 11 Z" fill="#d4d6da"/><circle cx="11.5" cy="12" r="5.2" fill="#8a8f99" stroke="#eceef0" stroke-width="1"/><circle cx="11.5" cy="12" r="2.3" fill="#c9ccd1"/><rect x="15" y="18" width="11" height="6" rx="1.5" fill="#4d7fb5"/></svg>
<div class="a" style="left:2518px;top:210.5px;width:4px;height:1.5px;background:#5a5f69;"></div>
<div class="a" style="left:2506.5px;top:218.5px;width:30.5px;height:1px;background:#80858f;"></div>
<svg style="left:2511.5px;top:226px;opacity:.85" width="16" height="16" viewBox="0 0 16 16"><rect x="1" y="2" width="9.5" height="9.5" fill="#74b054"/><circle cx="11.5" cy="12" r="2.6" fill="#b9bcc2"/></svg>
<div class="a" style="left:2518px;top:255.5px;width:4px;height:1.5px;background:#5a5f69;"></div>
<svg style="left:2527.5px;top:266px" width="8" height="8" viewBox="0 0 8 8"><circle cx="4" cy="4" r="3.6" fill="#4f545e"/><path d="M1.8 2.2 H6.2" stroke="#e0e2e6" stroke-width="1"/><path d="M1.8 3.8 H6.2 L4 6.2 Z" fill="#e0e2e6"/></svg>
<div class="a" style="left:2334px;top:185.5px;width:37.5px;height:18.5px;background:#7b7b7b;border-radius:9.3px"></div>
<div class="a" style="left:2337.6px;top:188.6px;width:13.2px;height:13.2px;background:#ffffff;border-radius:50%"></div>
<div class="t " style="left:2376px;top:178.8px;color:#c6cad1;letter-spacing:-0.22px">Accelerated Graphics</div>
<div class="t " style="left:2376px;top:192.1px;color:#c6cad1;font-style:italic;letter-spacing:-0.2px">Tech Preview</div>
<svg style="left:0;top:0;pointer-events:none" width="2560" height="1366" viewBox="0 0 2560 1366"><defs><g id="wm" fill-rule="evenodd"><path d="M0 0 H18 Q33.75 0 33.75 14 V43.5 Q33.75 57.5 18 57.5 H0 Z M13 10 V47.5 H16 Q20.5 47.5 20.5 43 V14.5 Q20.5 10 16 10 Z"/><path transform="translate(41.25 0)" d="M0 14 Q0 -1 16.6 -1 Q33.15 -1 33.15 14 V43.5 Q33.15 58.5 16.6 58.5 Q0 58.5 0 43.5 Z M13 13.5 V44 Q13 47.5 16.6 47.5 Q20.2 47.5 20.2 44 V13.5 Q20.2 10 16.6 10 Q13 10 13 13.5 Z"/><path transform="translate(81.25 0)" d="M0 0 H16.5 L23.1 30 L29.7 0 H46.25 V57.5 H34.7 V17 L27 57.5 H19.2 L11.5 17 V57.5 H0 Z"/><path transform="translate(131.9 0)" d="M0 0 H13 L19.4 38 L25.8 0 H38.7 L27.8 57.5 H10.9 Z"/><rect x="172.5" y="46.5" width="9.4" height="11"/><path transform="translate(188.1 0)" d="M0 0 H13 V44 Q13 47.5 16.25 47.5 Q19.5 47.5 19.5 44 V0 H32.5 V43.5 Q32.5 58.5 16.25 58.5 Q0 58.5 0 43.5 Z"/><path transform="translate(228.1 0)" d="M0 0 H13 V22 L21 0 H34 L24.5 23.5 L35 57.5 H22 L15.7 33.5 L13 40 V57.5 H0 Z"/></g></defs><g fill="#000"><use href="#wm" x="92" y="63.5" opacity="0.115"/><use href="#wm" x="1062.5" y="90" opacity="0.115"/><use href="#wm" x="2136" y="68.5" opacity="0.115"/><use href="#wm" x="584.4" y="329.4" opacity="0.09"/><use href="#wm" x="1776" y="307.5" opacity="0.09"/><use href="#wm" x="191.5" y="661.5" opacity="0.09"/><use href="#wm" x="1242" y="692" opacity="0.09"/><use href="#wm" x="2046" y="674.5" opacity="0.09"/><use href="#wm" x="692.8" y="948.8" opacity="0.09"/><use href="#wm" x="1727.4" y="951.8" opacity="0.09"/><use href="#wm" x="160" y="1219" opacity="0.09"/><use href="#wm" x="1051.5" y="1215.6" opacity="0.09"/><use href="#wm" x="2116" y="1219.5" opacity="0.09"/></g></svg>
</div></body></html>
